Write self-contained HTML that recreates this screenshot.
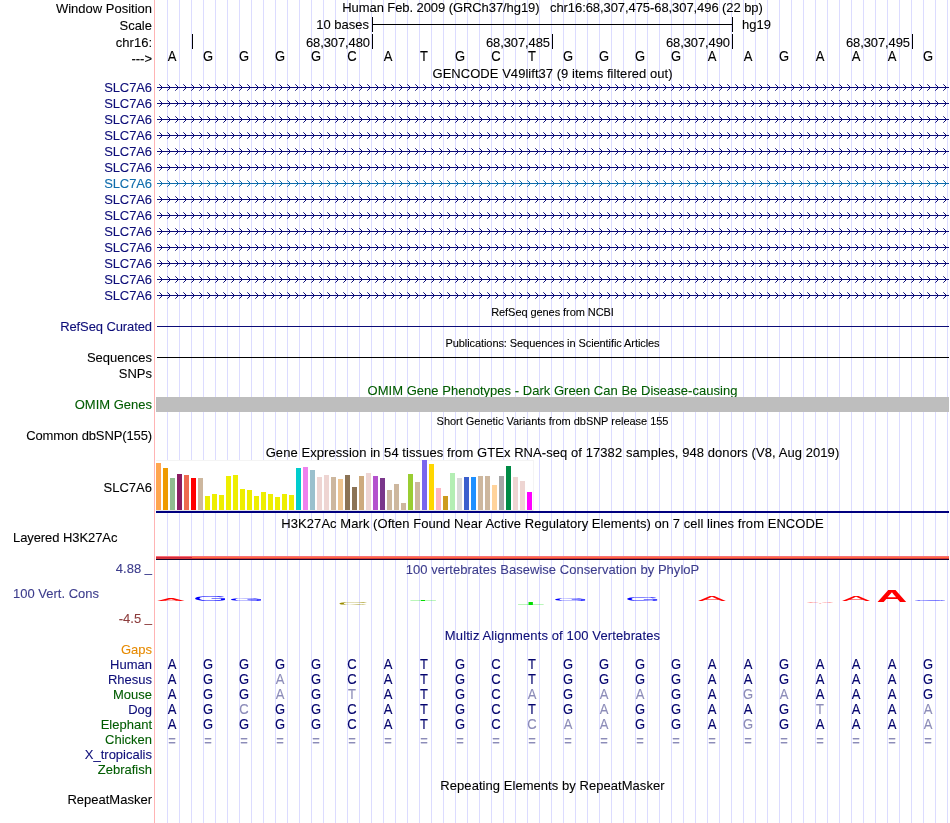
<!DOCTYPE html><html><head><meta charset="utf-8"><title>UCSC Genome Browser chr16:68,307,475-68,307,496</title><style>
html,body{margin:0;padding:0;background:#fff}
body{width:950px;height:823px;position:relative;overflow:hidden;font:13px/16px "Liberation Sans",Arial,Helvetica,sans-serif;color:#000}
.t{position:absolute;white-space:pre;height:16px;transform:scaleY(1.05);transform-origin:0 12px}
.r{text-align:right;left:0;width:152px}
.c{text-align:center;left:155px;width:795px}
.t.s{font-size:11px;transform:none}
.b{position:absolute;width:40px;margin-left:-20px;text-align:center;white-space:pre;height:16px;transform:translateY(-0.4px) scaleY(1.12);transform-origin:0 12px}
.g{position:absolute}
.t,.b{-webkit-text-stroke:0.1px}
.nv{color:#0c0c78}.b.nv{color:#04046e}.dg{color:#005c00}.lt{color:#8c8cb8}
#w{position:absolute;left:0;top:0;width:950px;height:823px;will-change:transform}
</style></head><body><div id="w">
<div class="g" style="left:167px;top:0;width:783px;height:823px;background-image:linear-gradient(90deg,#dcdcff 1px,transparent 1px);background-size:12px 100%"></div>
<div class="g" style="left:154px;top:0;width:1px;height:823px;background:#ffb4b4"></div>
<div class="t r " style="top:1px;">Window Position</div>
<div class="t r " style="top:18px;">Scale</div>
<div class="t r " style="top:35px;">chr16:</div>
<div class="t r " style="top:51px;">---&gt;</div>
<div class="t c " style="top:0px;letter-spacing:-0.078px">Human Feb. 2009 (GRCh37/hg19)   chr16:68,307,475-68,307,496 (22 bp)</div>
<div class="g" style="left:372px;top:17px;width:1px;height:15px;background:#000"></div>
<div class="g" style="left:732px;top:17px;width:1px;height:15px;background:#000"></div>
<div class="g" style="left:372px;top:24px;width:361px;height:1px;background:#000"></div>
<div class="t" style="left:200px;width:169px;text-align:right;top:17px">10 bases</div>
<div class="t" style="left:742px;top:17px">hg19</div>
<div class="g" style="left:192px;top:34px;width:1px;height:15px;background:#000"></div>
<div class="g" style="left:372px;top:34px;width:1px;height:15px;background:#000"></div>
<div class="t" style="left:270px;width:100px;text-align:right;top:35px;letter-spacing:-0.1px">68,307,480</div>
<div class="g" style="left:552px;top:34px;width:1px;height:15px;background:#000"></div>
<div class="t" style="left:450px;width:100px;text-align:right;top:35px;letter-spacing:-0.1px">68,307,485</div>
<div class="g" style="left:732px;top:34px;width:1px;height:15px;background:#000"></div>
<div class="t" style="left:630px;width:100px;text-align:right;top:35px;letter-spacing:-0.1px">68,307,490</div>
<div class="g" style="left:912px;top:34px;width:1px;height:15px;background:#000"></div>
<div class="t" style="left:810px;width:100px;text-align:right;top:35px;letter-spacing:-0.1px">68,307,495</div>
<div class="b" style="left:172.0px;top:49px">A</div>
<div class="b" style="left:208.0px;top:49px">G</div>
<div class="b" style="left:244.0px;top:49px">G</div>
<div class="b" style="left:280.0px;top:49px">G</div>
<div class="b" style="left:316.0px;top:49px">G</div>
<div class="b" style="left:352.0px;top:49px">C</div>
<div class="b" style="left:388.0px;top:49px">A</div>
<div class="b" style="left:424.0px;top:49px">T</div>
<div class="b" style="left:460.0px;top:49px">G</div>
<div class="b" style="left:496.0px;top:49px">C</div>
<div class="b" style="left:532.0px;top:49px">T</div>
<div class="b" style="left:568.0px;top:49px">G</div>
<div class="b" style="left:604.0px;top:49px">G</div>
<div class="b" style="left:640.0px;top:49px">G</div>
<div class="b" style="left:676.0px;top:49px">G</div>
<div class="b" style="left:712.0px;top:49px">A</div>
<div class="b" style="left:748.0px;top:49px">A</div>
<div class="b" style="left:784.0px;top:49px">G</div>
<div class="b" style="left:820.0px;top:49px">A</div>
<div class="b" style="left:856.0px;top:49px">A</div>
<div class="b" style="left:892.0px;top:49px">A</div>
<div class="b" style="left:928.0px;top:49px">G</div>
<div class="t c " style="top:66px;letter-spacing:0.04px">GENCODE V49lift37 (9 items filtered out)</div>
<div class="t r" style="top:80px;color:#0c0c78;letter-spacing:-0.1px">SLC7A6</div>
<div class="t r" style="top:96px;color:#0c0c78;letter-spacing:-0.1px">SLC7A6</div>
<div class="t r" style="top:112px;color:#0c0c78;letter-spacing:-0.1px">SLC7A6</div>
<div class="t r" style="top:128px;color:#0c0c78;letter-spacing:-0.1px">SLC7A6</div>
<div class="t r" style="top:144px;color:#0c0c78;letter-spacing:-0.1px">SLC7A6</div>
<div class="t r" style="top:160px;color:#0c0c78;letter-spacing:-0.1px">SLC7A6</div>
<div class="t r" style="top:176px;color:#0f6cac;letter-spacing:-0.1px">SLC7A6</div>
<div class="t r" style="top:192px;color:#0c0c78;letter-spacing:-0.1px">SLC7A6</div>
<div class="t r" style="top:208px;color:#0c0c78;letter-spacing:-0.1px">SLC7A6</div>
<div class="t r" style="top:224px;color:#0c0c78;letter-spacing:-0.1px">SLC7A6</div>
<div class="t r" style="top:240px;color:#0c0c78;letter-spacing:-0.1px">SLC7A6</div>
<div class="t r" style="top:256px;color:#0c0c78;letter-spacing:-0.1px">SLC7A6</div>
<div class="t r" style="top:272px;color:#0c0c78;letter-spacing:-0.1px">SLC7A6</div>
<div class="t r" style="top:288px;color:#0c0c78;letter-spacing:-0.1px">SLC7A6</div>
<svg class="g" style="left:0;top:0" width="950" height="823" viewBox="0 0 950 823"><defs><path id="ch" d="M-3.5,-3.5L0,0L-3.5,3.5" fill="none" stroke-width="1"/></defs>
<g stroke="#0c0c78"><path d="M157,87.5 H949" stroke-width="1" shape-rendering="crispEdges"/>
<path d="M159.3,84.3l3.2,3.2l-3.2,3.2M167.3,84.3l3.2,3.2l-3.2,3.2M175.3,84.3l3.2,3.2l-3.2,3.2M183.3,84.3l3.2,3.2l-3.2,3.2M191.3,84.3l3.2,3.2l-3.2,3.2M199.3,84.3l3.2,3.2l-3.2,3.2M207.3,84.3l3.2,3.2l-3.2,3.2M215.3,84.3l3.2,3.2l-3.2,3.2M223.3,84.3l3.2,3.2l-3.2,3.2M231.3,84.3l3.2,3.2l-3.2,3.2M239.3,84.3l3.2,3.2l-3.2,3.2M247.3,84.3l3.2,3.2l-3.2,3.2M255.3,84.3l3.2,3.2l-3.2,3.2M263.3,84.3l3.2,3.2l-3.2,3.2M271.3,84.3l3.2,3.2l-3.2,3.2M279.3,84.3l3.2,3.2l-3.2,3.2M287.3,84.3l3.2,3.2l-3.2,3.2M295.3,84.3l3.2,3.2l-3.2,3.2M303.3,84.3l3.2,3.2l-3.2,3.2M311.3,84.3l3.2,3.2l-3.2,3.2M319.3,84.3l3.2,3.2l-3.2,3.2M327.3,84.3l3.2,3.2l-3.2,3.2M335.3,84.3l3.2,3.2l-3.2,3.2M343.3,84.3l3.2,3.2l-3.2,3.2M351.3,84.3l3.2,3.2l-3.2,3.2M359.3,84.3l3.2,3.2l-3.2,3.2M367.3,84.3l3.2,3.2l-3.2,3.2M375.3,84.3l3.2,3.2l-3.2,3.2M383.3,84.3l3.2,3.2l-3.2,3.2M391.3,84.3l3.2,3.2l-3.2,3.2M399.3,84.3l3.2,3.2l-3.2,3.2M407.3,84.3l3.2,3.2l-3.2,3.2M415.3,84.3l3.2,3.2l-3.2,3.2M423.3,84.3l3.2,3.2l-3.2,3.2M431.3,84.3l3.2,3.2l-3.2,3.2M439.3,84.3l3.2,3.2l-3.2,3.2M447.3,84.3l3.2,3.2l-3.2,3.2M455.3,84.3l3.2,3.2l-3.2,3.2M463.3,84.3l3.2,3.2l-3.2,3.2M471.3,84.3l3.2,3.2l-3.2,3.2M479.3,84.3l3.2,3.2l-3.2,3.2M487.3,84.3l3.2,3.2l-3.2,3.2M495.3,84.3l3.2,3.2l-3.2,3.2M503.3,84.3l3.2,3.2l-3.2,3.2M511.3,84.3l3.2,3.2l-3.2,3.2M519.3,84.3l3.2,3.2l-3.2,3.2M527.3,84.3l3.2,3.2l-3.2,3.2M535.3,84.3l3.2,3.2l-3.2,3.2M543.3,84.3l3.2,3.2l-3.2,3.2M551.3,84.3l3.2,3.2l-3.2,3.2M559.3,84.3l3.2,3.2l-3.2,3.2M567.3,84.3l3.2,3.2l-3.2,3.2M575.3,84.3l3.2,3.2l-3.2,3.2M583.3,84.3l3.2,3.2l-3.2,3.2M591.3,84.3l3.2,3.2l-3.2,3.2M599.3,84.3l3.2,3.2l-3.2,3.2M607.3,84.3l3.2,3.2l-3.2,3.2M615.3,84.3l3.2,3.2l-3.2,3.2M623.3,84.3l3.2,3.2l-3.2,3.2M631.3,84.3l3.2,3.2l-3.2,3.2M639.3,84.3l3.2,3.2l-3.2,3.2M647.3,84.3l3.2,3.2l-3.2,3.2M655.3,84.3l3.2,3.2l-3.2,3.2M663.3,84.3l3.2,3.2l-3.2,3.2M671.3,84.3l3.2,3.2l-3.2,3.2M679.3,84.3l3.2,3.2l-3.2,3.2M687.3,84.3l3.2,3.2l-3.2,3.2M695.3,84.3l3.2,3.2l-3.2,3.2M703.3,84.3l3.2,3.2l-3.2,3.2M711.3,84.3l3.2,3.2l-3.2,3.2M719.3,84.3l3.2,3.2l-3.2,3.2M727.3,84.3l3.2,3.2l-3.2,3.2M735.3,84.3l3.2,3.2l-3.2,3.2M743.3,84.3l3.2,3.2l-3.2,3.2M751.3,84.3l3.2,3.2l-3.2,3.2M759.3,84.3l3.2,3.2l-3.2,3.2M767.3,84.3l3.2,3.2l-3.2,3.2M775.3,84.3l3.2,3.2l-3.2,3.2M783.3,84.3l3.2,3.2l-3.2,3.2M791.3,84.3l3.2,3.2l-3.2,3.2M799.3,84.3l3.2,3.2l-3.2,3.2M807.3,84.3l3.2,3.2l-3.2,3.2M815.3,84.3l3.2,3.2l-3.2,3.2M823.3,84.3l3.2,3.2l-3.2,3.2M831.3,84.3l3.2,3.2l-3.2,3.2M839.3,84.3l3.2,3.2l-3.2,3.2M847.3,84.3l3.2,3.2l-3.2,3.2M855.3,84.3l3.2,3.2l-3.2,3.2M863.3,84.3l3.2,3.2l-3.2,3.2M871.3,84.3l3.2,3.2l-3.2,3.2M879.3,84.3l3.2,3.2l-3.2,3.2M887.3,84.3l3.2,3.2l-3.2,3.2M895.3,84.3l3.2,3.2l-3.2,3.2M903.3,84.3l3.2,3.2l-3.2,3.2M911.3,84.3l3.2,3.2l-3.2,3.2M919.3,84.3l3.2,3.2l-3.2,3.2M927.3,84.3l3.2,3.2l-3.2,3.2M935.3,84.3l3.2,3.2l-3.2,3.2M943.3,84.3l3.2,3.2l-3.2,3.2" fill="none" stroke-width="1"/></g>
<g stroke="#0c0c78"><path d="M157,103.5 H949" stroke-width="1" shape-rendering="crispEdges"/>
<path d="M159.3,100.3l3.2,3.2l-3.2,3.2M167.3,100.3l3.2,3.2l-3.2,3.2M175.3,100.3l3.2,3.2l-3.2,3.2M183.3,100.3l3.2,3.2l-3.2,3.2M191.3,100.3l3.2,3.2l-3.2,3.2M199.3,100.3l3.2,3.2l-3.2,3.2M207.3,100.3l3.2,3.2l-3.2,3.2M215.3,100.3l3.2,3.2l-3.2,3.2M223.3,100.3l3.2,3.2l-3.2,3.2M231.3,100.3l3.2,3.2l-3.2,3.2M239.3,100.3l3.2,3.2l-3.2,3.2M247.3,100.3l3.2,3.2l-3.2,3.2M255.3,100.3l3.2,3.2l-3.2,3.2M263.3,100.3l3.2,3.2l-3.2,3.2M271.3,100.3l3.2,3.2l-3.2,3.2M279.3,100.3l3.2,3.2l-3.2,3.2M287.3,100.3l3.2,3.2l-3.2,3.2M295.3,100.3l3.2,3.2l-3.2,3.2M303.3,100.3l3.2,3.2l-3.2,3.2M311.3,100.3l3.2,3.2l-3.2,3.2M319.3,100.3l3.2,3.2l-3.2,3.2M327.3,100.3l3.2,3.2l-3.2,3.2M335.3,100.3l3.2,3.2l-3.2,3.2M343.3,100.3l3.2,3.2l-3.2,3.2M351.3,100.3l3.2,3.2l-3.2,3.2M359.3,100.3l3.2,3.2l-3.2,3.2M367.3,100.3l3.2,3.2l-3.2,3.2M375.3,100.3l3.2,3.2l-3.2,3.2M383.3,100.3l3.2,3.2l-3.2,3.2M391.3,100.3l3.2,3.2l-3.2,3.2M399.3,100.3l3.2,3.2l-3.2,3.2M407.3,100.3l3.2,3.2l-3.2,3.2M415.3,100.3l3.2,3.2l-3.2,3.2M423.3,100.3l3.2,3.2l-3.2,3.2M431.3,100.3l3.2,3.2l-3.2,3.2M439.3,100.3l3.2,3.2l-3.2,3.2M447.3,100.3l3.2,3.2l-3.2,3.2M455.3,100.3l3.2,3.2l-3.2,3.2M463.3,100.3l3.2,3.2l-3.2,3.2M471.3,100.3l3.2,3.2l-3.2,3.2M479.3,100.3l3.2,3.2l-3.2,3.2M487.3,100.3l3.2,3.2l-3.2,3.2M495.3,100.3l3.2,3.2l-3.2,3.2M503.3,100.3l3.2,3.2l-3.2,3.2M511.3,100.3l3.2,3.2l-3.2,3.2M519.3,100.3l3.2,3.2l-3.2,3.2M527.3,100.3l3.2,3.2l-3.2,3.2M535.3,100.3l3.2,3.2l-3.2,3.2M543.3,100.3l3.2,3.2l-3.2,3.2M551.3,100.3l3.2,3.2l-3.2,3.2M559.3,100.3l3.2,3.2l-3.2,3.2M567.3,100.3l3.2,3.2l-3.2,3.2M575.3,100.3l3.2,3.2l-3.2,3.2M583.3,100.3l3.2,3.2l-3.2,3.2M591.3,100.3l3.2,3.2l-3.2,3.2M599.3,100.3l3.2,3.2l-3.2,3.2M607.3,100.3l3.2,3.2l-3.2,3.2M615.3,100.3l3.2,3.2l-3.2,3.2M623.3,100.3l3.2,3.2l-3.2,3.2M631.3,100.3l3.2,3.2l-3.2,3.2M639.3,100.3l3.2,3.2l-3.2,3.2M647.3,100.3l3.2,3.2l-3.2,3.2M655.3,100.3l3.2,3.2l-3.2,3.2M663.3,100.3l3.2,3.2l-3.2,3.2M671.3,100.3l3.2,3.2l-3.2,3.2M679.3,100.3l3.2,3.2l-3.2,3.2M687.3,100.3l3.2,3.2l-3.2,3.2M695.3,100.3l3.2,3.2l-3.2,3.2M703.3,100.3l3.2,3.2l-3.2,3.2M711.3,100.3l3.2,3.2l-3.2,3.2M719.3,100.3l3.2,3.2l-3.2,3.2M727.3,100.3l3.2,3.2l-3.2,3.2M735.3,100.3l3.2,3.2l-3.2,3.2M743.3,100.3l3.2,3.2l-3.2,3.2M751.3,100.3l3.2,3.2l-3.2,3.2M759.3,100.3l3.2,3.2l-3.2,3.2M767.3,100.3l3.2,3.2l-3.2,3.2M775.3,100.3l3.2,3.2l-3.2,3.2M783.3,100.3l3.2,3.2l-3.2,3.2M791.3,100.3l3.2,3.2l-3.2,3.2M799.3,100.3l3.2,3.2l-3.2,3.2M807.3,100.3l3.2,3.2l-3.2,3.2M815.3,100.3l3.2,3.2l-3.2,3.2M823.3,100.3l3.2,3.2l-3.2,3.2M831.3,100.3l3.2,3.2l-3.2,3.2M839.3,100.3l3.2,3.2l-3.2,3.2M847.3,100.3l3.2,3.2l-3.2,3.2M855.3,100.3l3.2,3.2l-3.2,3.2M863.3,100.3l3.2,3.2l-3.2,3.2M871.3,100.3l3.2,3.2l-3.2,3.2M879.3,100.3l3.2,3.2l-3.2,3.2M887.3,100.3l3.2,3.2l-3.2,3.2M895.3,100.3l3.2,3.2l-3.2,3.2M903.3,100.3l3.2,3.2l-3.2,3.2M911.3,100.3l3.2,3.2l-3.2,3.2M919.3,100.3l3.2,3.2l-3.2,3.2M927.3,100.3l3.2,3.2l-3.2,3.2M935.3,100.3l3.2,3.2l-3.2,3.2M943.3,100.3l3.2,3.2l-3.2,3.2" fill="none" stroke-width="1"/></g>
<g stroke="#0c0c78"><path d="M157,119.5 H949" stroke-width="1" shape-rendering="crispEdges"/>
<path d="M159.3,116.3l3.2,3.2l-3.2,3.2M167.3,116.3l3.2,3.2l-3.2,3.2M175.3,116.3l3.2,3.2l-3.2,3.2M183.3,116.3l3.2,3.2l-3.2,3.2M191.3,116.3l3.2,3.2l-3.2,3.2M199.3,116.3l3.2,3.2l-3.2,3.2M207.3,116.3l3.2,3.2l-3.2,3.2M215.3,116.3l3.2,3.2l-3.2,3.2M223.3,116.3l3.2,3.2l-3.2,3.2M231.3,116.3l3.2,3.2l-3.2,3.2M239.3,116.3l3.2,3.2l-3.2,3.2M247.3,116.3l3.2,3.2l-3.2,3.2M255.3,116.3l3.2,3.2l-3.2,3.2M263.3,116.3l3.2,3.2l-3.2,3.2M271.3,116.3l3.2,3.2l-3.2,3.2M279.3,116.3l3.2,3.2l-3.2,3.2M287.3,116.3l3.2,3.2l-3.2,3.2M295.3,116.3l3.2,3.2l-3.2,3.2M303.3,116.3l3.2,3.2l-3.2,3.2M311.3,116.3l3.2,3.2l-3.2,3.2M319.3,116.3l3.2,3.2l-3.2,3.2M327.3,116.3l3.2,3.2l-3.2,3.2M335.3,116.3l3.2,3.2l-3.2,3.2M343.3,116.3l3.2,3.2l-3.2,3.2M351.3,116.3l3.2,3.2l-3.2,3.2M359.3,116.3l3.2,3.2l-3.2,3.2M367.3,116.3l3.2,3.2l-3.2,3.2M375.3,116.3l3.2,3.2l-3.2,3.2M383.3,116.3l3.2,3.2l-3.2,3.2M391.3,116.3l3.2,3.2l-3.2,3.2M399.3,116.3l3.2,3.2l-3.2,3.2M407.3,116.3l3.2,3.2l-3.2,3.2M415.3,116.3l3.2,3.2l-3.2,3.2M423.3,116.3l3.2,3.2l-3.2,3.2M431.3,116.3l3.2,3.2l-3.2,3.2M439.3,116.3l3.2,3.2l-3.2,3.2M447.3,116.3l3.2,3.2l-3.2,3.2M455.3,116.3l3.2,3.2l-3.2,3.2M463.3,116.3l3.2,3.2l-3.2,3.2M471.3,116.3l3.2,3.2l-3.2,3.2M479.3,116.3l3.2,3.2l-3.2,3.2M487.3,116.3l3.2,3.2l-3.2,3.2M495.3,116.3l3.2,3.2l-3.2,3.2M503.3,116.3l3.2,3.2l-3.2,3.2M511.3,116.3l3.2,3.2l-3.2,3.2M519.3,116.3l3.2,3.2l-3.2,3.2M527.3,116.3l3.2,3.2l-3.2,3.2M535.3,116.3l3.2,3.2l-3.2,3.2M543.3,116.3l3.2,3.2l-3.2,3.2M551.3,116.3l3.2,3.2l-3.2,3.2M559.3,116.3l3.2,3.2l-3.2,3.2M567.3,116.3l3.2,3.2l-3.2,3.2M575.3,116.3l3.2,3.2l-3.2,3.2M583.3,116.3l3.2,3.2l-3.2,3.2M591.3,116.3l3.2,3.2l-3.2,3.2M599.3,116.3l3.2,3.2l-3.2,3.2M607.3,116.3l3.2,3.2l-3.2,3.2M615.3,116.3l3.2,3.2l-3.2,3.2M623.3,116.3l3.2,3.2l-3.2,3.2M631.3,116.3l3.2,3.2l-3.2,3.2M639.3,116.3l3.2,3.2l-3.2,3.2M647.3,116.3l3.2,3.2l-3.2,3.2M655.3,116.3l3.2,3.2l-3.2,3.2M663.3,116.3l3.2,3.2l-3.2,3.2M671.3,116.3l3.2,3.2l-3.2,3.2M679.3,116.3l3.2,3.2l-3.2,3.2M687.3,116.3l3.2,3.2l-3.2,3.2M695.3,116.3l3.2,3.2l-3.2,3.2M703.3,116.3l3.2,3.2l-3.2,3.2M711.3,116.3l3.2,3.2l-3.2,3.2M719.3,116.3l3.2,3.2l-3.2,3.2M727.3,116.3l3.2,3.2l-3.2,3.2M735.3,116.3l3.2,3.2l-3.2,3.2M743.3,116.3l3.2,3.2l-3.2,3.2M751.3,116.3l3.2,3.2l-3.2,3.2M759.3,116.3l3.2,3.2l-3.2,3.2M767.3,116.3l3.2,3.2l-3.2,3.2M775.3,116.3l3.2,3.2l-3.2,3.2M783.3,116.3l3.2,3.2l-3.2,3.2M791.3,116.3l3.2,3.2l-3.2,3.2M799.3,116.3l3.2,3.2l-3.2,3.2M807.3,116.3l3.2,3.2l-3.2,3.2M815.3,116.3l3.2,3.2l-3.2,3.2M823.3,116.3l3.2,3.2l-3.2,3.2M831.3,116.3l3.2,3.2l-3.2,3.2M839.3,116.3l3.2,3.2l-3.2,3.2M847.3,116.3l3.2,3.2l-3.2,3.2M855.3,116.3l3.2,3.2l-3.2,3.2M863.3,116.3l3.2,3.2l-3.2,3.2M871.3,116.3l3.2,3.2l-3.2,3.2M879.3,116.3l3.2,3.2l-3.2,3.2M887.3,116.3l3.2,3.2l-3.2,3.2M895.3,116.3l3.2,3.2l-3.2,3.2M903.3,116.3l3.2,3.2l-3.2,3.2M911.3,116.3l3.2,3.2l-3.2,3.2M919.3,116.3l3.2,3.2l-3.2,3.2M927.3,116.3l3.2,3.2l-3.2,3.2M935.3,116.3l3.2,3.2l-3.2,3.2M943.3,116.3l3.2,3.2l-3.2,3.2" fill="none" stroke-width="1"/></g>
<g stroke="#0c0c78"><path d="M157,135.5 H949" stroke-width="1" shape-rendering="crispEdges"/>
<path d="M159.3,132.3l3.2,3.2l-3.2,3.2M167.3,132.3l3.2,3.2l-3.2,3.2M175.3,132.3l3.2,3.2l-3.2,3.2M183.3,132.3l3.2,3.2l-3.2,3.2M191.3,132.3l3.2,3.2l-3.2,3.2M199.3,132.3l3.2,3.2l-3.2,3.2M207.3,132.3l3.2,3.2l-3.2,3.2M215.3,132.3l3.2,3.2l-3.2,3.2M223.3,132.3l3.2,3.2l-3.2,3.2M231.3,132.3l3.2,3.2l-3.2,3.2M239.3,132.3l3.2,3.2l-3.2,3.2M247.3,132.3l3.2,3.2l-3.2,3.2M255.3,132.3l3.2,3.2l-3.2,3.2M263.3,132.3l3.2,3.2l-3.2,3.2M271.3,132.3l3.2,3.2l-3.2,3.2M279.3,132.3l3.2,3.2l-3.2,3.2M287.3,132.3l3.2,3.2l-3.2,3.2M295.3,132.3l3.2,3.2l-3.2,3.2M303.3,132.3l3.2,3.2l-3.2,3.2M311.3,132.3l3.2,3.2l-3.2,3.2M319.3,132.3l3.2,3.2l-3.2,3.2M327.3,132.3l3.2,3.2l-3.2,3.2M335.3,132.3l3.2,3.2l-3.2,3.2M343.3,132.3l3.2,3.2l-3.2,3.2M351.3,132.3l3.2,3.2l-3.2,3.2M359.3,132.3l3.2,3.2l-3.2,3.2M367.3,132.3l3.2,3.2l-3.2,3.2M375.3,132.3l3.2,3.2l-3.2,3.2M383.3,132.3l3.2,3.2l-3.2,3.2M391.3,132.3l3.2,3.2l-3.2,3.2M399.3,132.3l3.2,3.2l-3.2,3.2M407.3,132.3l3.2,3.2l-3.2,3.2M415.3,132.3l3.2,3.2l-3.2,3.2M423.3,132.3l3.2,3.2l-3.2,3.2M431.3,132.3l3.2,3.2l-3.2,3.2M439.3,132.3l3.2,3.2l-3.2,3.2M447.3,132.3l3.2,3.2l-3.2,3.2M455.3,132.3l3.2,3.2l-3.2,3.2M463.3,132.3l3.2,3.2l-3.2,3.2M471.3,132.3l3.2,3.2l-3.2,3.2M479.3,132.3l3.2,3.2l-3.2,3.2M487.3,132.3l3.2,3.2l-3.2,3.2M495.3,132.3l3.2,3.2l-3.2,3.2M503.3,132.3l3.2,3.2l-3.2,3.2M511.3,132.3l3.2,3.2l-3.2,3.2M519.3,132.3l3.2,3.2l-3.2,3.2M527.3,132.3l3.2,3.2l-3.2,3.2M535.3,132.3l3.2,3.2l-3.2,3.2M543.3,132.3l3.2,3.2l-3.2,3.2M551.3,132.3l3.2,3.2l-3.2,3.2M559.3,132.3l3.2,3.2l-3.2,3.2M567.3,132.3l3.2,3.2l-3.2,3.2M575.3,132.3l3.2,3.2l-3.2,3.2M583.3,132.3l3.2,3.2l-3.2,3.2M591.3,132.3l3.2,3.2l-3.2,3.2M599.3,132.3l3.2,3.2l-3.2,3.2M607.3,132.3l3.2,3.2l-3.2,3.2M615.3,132.3l3.2,3.2l-3.2,3.2M623.3,132.3l3.2,3.2l-3.2,3.2M631.3,132.3l3.2,3.2l-3.2,3.2M639.3,132.3l3.2,3.2l-3.2,3.2M647.3,132.3l3.2,3.2l-3.2,3.2M655.3,132.3l3.2,3.2l-3.2,3.2M663.3,132.3l3.2,3.2l-3.2,3.2M671.3,132.3l3.2,3.2l-3.2,3.2M679.3,132.3l3.2,3.2l-3.2,3.2M687.3,132.3l3.2,3.2l-3.2,3.2M695.3,132.3l3.2,3.2l-3.2,3.2M703.3,132.3l3.2,3.2l-3.2,3.2M711.3,132.3l3.2,3.2l-3.2,3.2M719.3,132.3l3.2,3.2l-3.2,3.2M727.3,132.3l3.2,3.2l-3.2,3.2M735.3,132.3l3.2,3.2l-3.2,3.2M743.3,132.3l3.2,3.2l-3.2,3.2M751.3,132.3l3.2,3.2l-3.2,3.2M759.3,132.3l3.2,3.2l-3.2,3.2M767.3,132.3l3.2,3.2l-3.2,3.2M775.3,132.3l3.2,3.2l-3.2,3.2M783.3,132.3l3.2,3.2l-3.2,3.2M791.3,132.3l3.2,3.2l-3.2,3.2M799.3,132.3l3.2,3.2l-3.2,3.2M807.3,132.3l3.2,3.2l-3.2,3.2M815.3,132.3l3.2,3.2l-3.2,3.2M823.3,132.3l3.2,3.2l-3.2,3.2M831.3,132.3l3.2,3.2l-3.2,3.2M839.3,132.3l3.2,3.2l-3.2,3.2M847.3,132.3l3.2,3.2l-3.2,3.2M855.3,132.3l3.2,3.2l-3.2,3.2M863.3,132.3l3.2,3.2l-3.2,3.2M871.3,132.3l3.2,3.2l-3.2,3.2M879.3,132.3l3.2,3.2l-3.2,3.2M887.3,132.3l3.2,3.2l-3.2,3.2M895.3,132.3l3.2,3.2l-3.2,3.2M903.3,132.3l3.2,3.2l-3.2,3.2M911.3,132.3l3.2,3.2l-3.2,3.2M919.3,132.3l3.2,3.2l-3.2,3.2M927.3,132.3l3.2,3.2l-3.2,3.2M935.3,132.3l3.2,3.2l-3.2,3.2M943.3,132.3l3.2,3.2l-3.2,3.2" fill="none" stroke-width="1"/></g>
<g stroke="#0c0c78"><path d="M157,151.5 H949" stroke-width="1" shape-rendering="crispEdges"/>
<path d="M159.3,148.3l3.2,3.2l-3.2,3.2M167.3,148.3l3.2,3.2l-3.2,3.2M175.3,148.3l3.2,3.2l-3.2,3.2M183.3,148.3l3.2,3.2l-3.2,3.2M191.3,148.3l3.2,3.2l-3.2,3.2M199.3,148.3l3.2,3.2l-3.2,3.2M207.3,148.3l3.2,3.2l-3.2,3.2M215.3,148.3l3.2,3.2l-3.2,3.2M223.3,148.3l3.2,3.2l-3.2,3.2M231.3,148.3l3.2,3.2l-3.2,3.2M239.3,148.3l3.2,3.2l-3.2,3.2M247.3,148.3l3.2,3.2l-3.2,3.2M255.3,148.3l3.2,3.2l-3.2,3.2M263.3,148.3l3.2,3.2l-3.2,3.2M271.3,148.3l3.2,3.2l-3.2,3.2M279.3,148.3l3.2,3.2l-3.2,3.2M287.3,148.3l3.2,3.2l-3.2,3.2M295.3,148.3l3.2,3.2l-3.2,3.2M303.3,148.3l3.2,3.2l-3.2,3.2M311.3,148.3l3.2,3.2l-3.2,3.2M319.3,148.3l3.2,3.2l-3.2,3.2M327.3,148.3l3.2,3.2l-3.2,3.2M335.3,148.3l3.2,3.2l-3.2,3.2M343.3,148.3l3.2,3.2l-3.2,3.2M351.3,148.3l3.2,3.2l-3.2,3.2M359.3,148.3l3.2,3.2l-3.2,3.2M367.3,148.3l3.2,3.2l-3.2,3.2M375.3,148.3l3.2,3.2l-3.2,3.2M383.3,148.3l3.2,3.2l-3.2,3.2M391.3,148.3l3.2,3.2l-3.2,3.2M399.3,148.3l3.2,3.2l-3.2,3.2M407.3,148.3l3.2,3.2l-3.2,3.2M415.3,148.3l3.2,3.2l-3.2,3.2M423.3,148.3l3.2,3.2l-3.2,3.2M431.3,148.3l3.2,3.2l-3.2,3.2M439.3,148.3l3.2,3.2l-3.2,3.2M447.3,148.3l3.2,3.2l-3.2,3.2M455.3,148.3l3.2,3.2l-3.2,3.2M463.3,148.3l3.2,3.2l-3.2,3.2M471.3,148.3l3.2,3.2l-3.2,3.2M479.3,148.3l3.2,3.2l-3.2,3.2M487.3,148.3l3.2,3.2l-3.2,3.2M495.3,148.3l3.2,3.2l-3.2,3.2M503.3,148.3l3.2,3.2l-3.2,3.2M511.3,148.3l3.2,3.2l-3.2,3.2M519.3,148.3l3.2,3.2l-3.2,3.2M527.3,148.3l3.2,3.2l-3.2,3.2M535.3,148.3l3.2,3.2l-3.2,3.2M543.3,148.3l3.2,3.2l-3.2,3.2M551.3,148.3l3.2,3.2l-3.2,3.2M559.3,148.3l3.2,3.2l-3.2,3.2M567.3,148.3l3.2,3.2l-3.2,3.2M575.3,148.3l3.2,3.2l-3.2,3.2M583.3,148.3l3.2,3.2l-3.2,3.2M591.3,148.3l3.2,3.2l-3.2,3.2M599.3,148.3l3.2,3.2l-3.2,3.2M607.3,148.3l3.2,3.2l-3.2,3.2M615.3,148.3l3.2,3.2l-3.2,3.2M623.3,148.3l3.2,3.2l-3.2,3.2M631.3,148.3l3.2,3.2l-3.2,3.2M639.3,148.3l3.2,3.2l-3.2,3.2M647.3,148.3l3.2,3.2l-3.2,3.2M655.3,148.3l3.2,3.2l-3.2,3.2M663.3,148.3l3.2,3.2l-3.2,3.2M671.3,148.3l3.2,3.2l-3.2,3.2M679.3,148.3l3.2,3.2l-3.2,3.2M687.3,148.3l3.2,3.2l-3.2,3.2M695.3,148.3l3.2,3.2l-3.2,3.2M703.3,148.3l3.2,3.2l-3.2,3.2M711.3,148.3l3.2,3.2l-3.2,3.2M719.3,148.3l3.2,3.2l-3.2,3.2M727.3,148.3l3.2,3.2l-3.2,3.2M735.3,148.3l3.2,3.2l-3.2,3.2M743.3,148.3l3.2,3.2l-3.2,3.2M751.3,148.3l3.2,3.2l-3.2,3.2M759.3,148.3l3.2,3.2l-3.2,3.2M767.3,148.3l3.2,3.2l-3.2,3.2M775.3,148.3l3.2,3.2l-3.2,3.2M783.3,148.3l3.2,3.2l-3.2,3.2M791.3,148.3l3.2,3.2l-3.2,3.2M799.3,148.3l3.2,3.2l-3.2,3.2M807.3,148.3l3.2,3.2l-3.2,3.2M815.3,148.3l3.2,3.2l-3.2,3.2M823.3,148.3l3.2,3.2l-3.2,3.2M831.3,148.3l3.2,3.2l-3.2,3.2M839.3,148.3l3.2,3.2l-3.2,3.2M847.3,148.3l3.2,3.2l-3.2,3.2M855.3,148.3l3.2,3.2l-3.2,3.2M863.3,148.3l3.2,3.2l-3.2,3.2M871.3,148.3l3.2,3.2l-3.2,3.2M879.3,148.3l3.2,3.2l-3.2,3.2M887.3,148.3l3.2,3.2l-3.2,3.2M895.3,148.3l3.2,3.2l-3.2,3.2M903.3,148.3l3.2,3.2l-3.2,3.2M911.3,148.3l3.2,3.2l-3.2,3.2M919.3,148.3l3.2,3.2l-3.2,3.2M927.3,148.3l3.2,3.2l-3.2,3.2M935.3,148.3l3.2,3.2l-3.2,3.2M943.3,148.3l3.2,3.2l-3.2,3.2" fill="none" stroke-width="1"/></g>
<g stroke="#0c0c78"><path d="M157,167.5 H949" stroke-width="1" shape-rendering="crispEdges"/>
<path d="M159.3,164.3l3.2,3.2l-3.2,3.2M167.3,164.3l3.2,3.2l-3.2,3.2M175.3,164.3l3.2,3.2l-3.2,3.2M183.3,164.3l3.2,3.2l-3.2,3.2M191.3,164.3l3.2,3.2l-3.2,3.2M199.3,164.3l3.2,3.2l-3.2,3.2M207.3,164.3l3.2,3.2l-3.2,3.2M215.3,164.3l3.2,3.2l-3.2,3.2M223.3,164.3l3.2,3.2l-3.2,3.2M231.3,164.3l3.2,3.2l-3.2,3.2M239.3,164.3l3.2,3.2l-3.2,3.2M247.3,164.3l3.2,3.2l-3.2,3.2M255.3,164.3l3.2,3.2l-3.2,3.2M263.3,164.3l3.2,3.2l-3.2,3.2M271.3,164.3l3.2,3.2l-3.2,3.2M279.3,164.3l3.2,3.2l-3.2,3.2M287.3,164.3l3.2,3.2l-3.2,3.2M295.3,164.3l3.2,3.2l-3.2,3.2M303.3,164.3l3.2,3.2l-3.2,3.2M311.3,164.3l3.2,3.2l-3.2,3.2M319.3,164.3l3.2,3.2l-3.2,3.2M327.3,164.3l3.2,3.2l-3.2,3.2M335.3,164.3l3.2,3.2l-3.2,3.2M343.3,164.3l3.2,3.2l-3.2,3.2M351.3,164.3l3.2,3.2l-3.2,3.2M359.3,164.3l3.2,3.2l-3.2,3.2M367.3,164.3l3.2,3.2l-3.2,3.2M375.3,164.3l3.2,3.2l-3.2,3.2M383.3,164.3l3.2,3.2l-3.2,3.2M391.3,164.3l3.2,3.2l-3.2,3.2M399.3,164.3l3.2,3.2l-3.2,3.2M407.3,164.3l3.2,3.2l-3.2,3.2M415.3,164.3l3.2,3.2l-3.2,3.2M423.3,164.3l3.2,3.2l-3.2,3.2M431.3,164.3l3.2,3.2l-3.2,3.2M439.3,164.3l3.2,3.2l-3.2,3.2M447.3,164.3l3.2,3.2l-3.2,3.2M455.3,164.3l3.2,3.2l-3.2,3.2M463.3,164.3l3.2,3.2l-3.2,3.2M471.3,164.3l3.2,3.2l-3.2,3.2M479.3,164.3l3.2,3.2l-3.2,3.2M487.3,164.3l3.2,3.2l-3.2,3.2M495.3,164.3l3.2,3.2l-3.2,3.2M503.3,164.3l3.2,3.2l-3.2,3.2M511.3,164.3l3.2,3.2l-3.2,3.2M519.3,164.3l3.2,3.2l-3.2,3.2M527.3,164.3l3.2,3.2l-3.2,3.2M535.3,164.3l3.2,3.2l-3.2,3.2M543.3,164.3l3.2,3.2l-3.2,3.2M551.3,164.3l3.2,3.2l-3.2,3.2M559.3,164.3l3.2,3.2l-3.2,3.2M567.3,164.3l3.2,3.2l-3.2,3.2M575.3,164.3l3.2,3.2l-3.2,3.2M583.3,164.3l3.2,3.2l-3.2,3.2M591.3,164.3l3.2,3.2l-3.2,3.2M599.3,164.3l3.2,3.2l-3.2,3.2M607.3,164.3l3.2,3.2l-3.2,3.2M615.3,164.3l3.2,3.2l-3.2,3.2M623.3,164.3l3.2,3.2l-3.2,3.2M631.3,164.3l3.2,3.2l-3.2,3.2M639.3,164.3l3.2,3.2l-3.2,3.2M647.3,164.3l3.2,3.2l-3.2,3.2M655.3,164.3l3.2,3.2l-3.2,3.2M663.3,164.3l3.2,3.2l-3.2,3.2M671.3,164.3l3.2,3.2l-3.2,3.2M679.3,164.3l3.2,3.2l-3.2,3.2M687.3,164.3l3.2,3.2l-3.2,3.2M695.3,164.3l3.2,3.2l-3.2,3.2M703.3,164.3l3.2,3.2l-3.2,3.2M711.3,164.3l3.2,3.2l-3.2,3.2M719.3,164.3l3.2,3.2l-3.2,3.2M727.3,164.3l3.2,3.2l-3.2,3.2M735.3,164.3l3.2,3.2l-3.2,3.2M743.3,164.3l3.2,3.2l-3.2,3.2M751.3,164.3l3.2,3.2l-3.2,3.2M759.3,164.3l3.2,3.2l-3.2,3.2M767.3,164.3l3.2,3.2l-3.2,3.2M775.3,164.3l3.2,3.2l-3.2,3.2M783.3,164.3l3.2,3.2l-3.2,3.2M791.3,164.3l3.2,3.2l-3.2,3.2M799.3,164.3l3.2,3.2l-3.2,3.2M807.3,164.3l3.2,3.2l-3.2,3.2M815.3,164.3l3.2,3.2l-3.2,3.2M823.3,164.3l3.2,3.2l-3.2,3.2M831.3,164.3l3.2,3.2l-3.2,3.2M839.3,164.3l3.2,3.2l-3.2,3.2M847.3,164.3l3.2,3.2l-3.2,3.2M855.3,164.3l3.2,3.2l-3.2,3.2M863.3,164.3l3.2,3.2l-3.2,3.2M871.3,164.3l3.2,3.2l-3.2,3.2M879.3,164.3l3.2,3.2l-3.2,3.2M887.3,164.3l3.2,3.2l-3.2,3.2M895.3,164.3l3.2,3.2l-3.2,3.2M903.3,164.3l3.2,3.2l-3.2,3.2M911.3,164.3l3.2,3.2l-3.2,3.2M919.3,164.3l3.2,3.2l-3.2,3.2M927.3,164.3l3.2,3.2l-3.2,3.2M935.3,164.3l3.2,3.2l-3.2,3.2M943.3,164.3l3.2,3.2l-3.2,3.2" fill="none" stroke-width="1"/></g>
<g stroke="#0f6cac"><path d="M157,183.5 H949" stroke-width="1" shape-rendering="crispEdges"/>
<path d="M159.3,180.3l3.2,3.2l-3.2,3.2M167.3,180.3l3.2,3.2l-3.2,3.2M175.3,180.3l3.2,3.2l-3.2,3.2M183.3,180.3l3.2,3.2l-3.2,3.2M191.3,180.3l3.2,3.2l-3.2,3.2M199.3,180.3l3.2,3.2l-3.2,3.2M207.3,180.3l3.2,3.2l-3.2,3.2M215.3,180.3l3.2,3.2l-3.2,3.2M223.3,180.3l3.2,3.2l-3.2,3.2M231.3,180.3l3.2,3.2l-3.2,3.2M239.3,180.3l3.2,3.2l-3.2,3.2M247.3,180.3l3.2,3.2l-3.2,3.2M255.3,180.3l3.2,3.2l-3.2,3.2M263.3,180.3l3.2,3.2l-3.2,3.2M271.3,180.3l3.2,3.2l-3.2,3.2M279.3,180.3l3.2,3.2l-3.2,3.2M287.3,180.3l3.2,3.2l-3.2,3.2M295.3,180.3l3.2,3.2l-3.2,3.2M303.3,180.3l3.2,3.2l-3.2,3.2M311.3,180.3l3.2,3.2l-3.2,3.2M319.3,180.3l3.2,3.2l-3.2,3.2M327.3,180.3l3.2,3.2l-3.2,3.2M335.3,180.3l3.2,3.2l-3.2,3.2M343.3,180.3l3.2,3.2l-3.2,3.2M351.3,180.3l3.2,3.2l-3.2,3.2M359.3,180.3l3.2,3.2l-3.2,3.2M367.3,180.3l3.2,3.2l-3.2,3.2M375.3,180.3l3.2,3.2l-3.2,3.2M383.3,180.3l3.2,3.2l-3.2,3.2M391.3,180.3l3.2,3.2l-3.2,3.2M399.3,180.3l3.2,3.2l-3.2,3.2M407.3,180.3l3.2,3.2l-3.2,3.2M415.3,180.3l3.2,3.2l-3.2,3.2M423.3,180.3l3.2,3.2l-3.2,3.2M431.3,180.3l3.2,3.2l-3.2,3.2M439.3,180.3l3.2,3.2l-3.2,3.2M447.3,180.3l3.2,3.2l-3.2,3.2M455.3,180.3l3.2,3.2l-3.2,3.2M463.3,180.3l3.2,3.2l-3.2,3.2M471.3,180.3l3.2,3.2l-3.2,3.2M479.3,180.3l3.2,3.2l-3.2,3.2M487.3,180.3l3.2,3.2l-3.2,3.2M495.3,180.3l3.2,3.2l-3.2,3.2M503.3,180.3l3.2,3.2l-3.2,3.2M511.3,180.3l3.2,3.2l-3.2,3.2M519.3,180.3l3.2,3.2l-3.2,3.2M527.3,180.3l3.2,3.2l-3.2,3.2M535.3,180.3l3.2,3.2l-3.2,3.2M543.3,180.3l3.2,3.2l-3.2,3.2M551.3,180.3l3.2,3.2l-3.2,3.2M559.3,180.3l3.2,3.2l-3.2,3.2M567.3,180.3l3.2,3.2l-3.2,3.2M575.3,180.3l3.2,3.2l-3.2,3.2M583.3,180.3l3.2,3.2l-3.2,3.2M591.3,180.3l3.2,3.2l-3.2,3.2M599.3,180.3l3.2,3.2l-3.2,3.2M607.3,180.3l3.2,3.2l-3.2,3.2M615.3,180.3l3.2,3.2l-3.2,3.2M623.3,180.3l3.2,3.2l-3.2,3.2M631.3,180.3l3.2,3.2l-3.2,3.2M639.3,180.3l3.2,3.2l-3.2,3.2M647.3,180.3l3.2,3.2l-3.2,3.2M655.3,180.3l3.2,3.2l-3.2,3.2M663.3,180.3l3.2,3.2l-3.2,3.2M671.3,180.3l3.2,3.2l-3.2,3.2M679.3,180.3l3.2,3.2l-3.2,3.2M687.3,180.3l3.2,3.2l-3.2,3.2M695.3,180.3l3.2,3.2l-3.2,3.2M703.3,180.3l3.2,3.2l-3.2,3.2M711.3,180.3l3.2,3.2l-3.2,3.2M719.3,180.3l3.2,3.2l-3.2,3.2M727.3,180.3l3.2,3.2l-3.2,3.2M735.3,180.3l3.2,3.2l-3.2,3.2M743.3,180.3l3.2,3.2l-3.2,3.2M751.3,180.3l3.2,3.2l-3.2,3.2M759.3,180.3l3.2,3.2l-3.2,3.2M767.3,180.3l3.2,3.2l-3.2,3.2M775.3,180.3l3.2,3.2l-3.2,3.2M783.3,180.3l3.2,3.2l-3.2,3.2M791.3,180.3l3.2,3.2l-3.2,3.2M799.3,180.3l3.2,3.2l-3.2,3.2M807.3,180.3l3.2,3.2l-3.2,3.2M815.3,180.3l3.2,3.2l-3.2,3.2M823.3,180.3l3.2,3.2l-3.2,3.2M831.3,180.3l3.2,3.2l-3.2,3.2M839.3,180.3l3.2,3.2l-3.2,3.2M847.3,180.3l3.2,3.2l-3.2,3.2M855.3,180.3l3.2,3.2l-3.2,3.2M863.3,180.3l3.2,3.2l-3.2,3.2M871.3,180.3l3.2,3.2l-3.2,3.2M879.3,180.3l3.2,3.2l-3.2,3.2M887.3,180.3l3.2,3.2l-3.2,3.2M895.3,180.3l3.2,3.2l-3.2,3.2M903.3,180.3l3.2,3.2l-3.2,3.2M911.3,180.3l3.2,3.2l-3.2,3.2M919.3,180.3l3.2,3.2l-3.2,3.2M927.3,180.3l3.2,3.2l-3.2,3.2M935.3,180.3l3.2,3.2l-3.2,3.2M943.3,180.3l3.2,3.2l-3.2,3.2" fill="none" stroke-width="1"/></g>
<g stroke="#0c0c78"><path d="M157,199.5 H949" stroke-width="1" shape-rendering="crispEdges"/>
<path d="M159.3,196.3l3.2,3.2l-3.2,3.2M167.3,196.3l3.2,3.2l-3.2,3.2M175.3,196.3l3.2,3.2l-3.2,3.2M183.3,196.3l3.2,3.2l-3.2,3.2M191.3,196.3l3.2,3.2l-3.2,3.2M199.3,196.3l3.2,3.2l-3.2,3.2M207.3,196.3l3.2,3.2l-3.2,3.2M215.3,196.3l3.2,3.2l-3.2,3.2M223.3,196.3l3.2,3.2l-3.2,3.2M231.3,196.3l3.2,3.2l-3.2,3.2M239.3,196.3l3.2,3.2l-3.2,3.2M247.3,196.3l3.2,3.2l-3.2,3.2M255.3,196.3l3.2,3.2l-3.2,3.2M263.3,196.3l3.2,3.2l-3.2,3.2M271.3,196.3l3.2,3.2l-3.2,3.2M279.3,196.3l3.2,3.2l-3.2,3.2M287.3,196.3l3.2,3.2l-3.2,3.2M295.3,196.3l3.2,3.2l-3.2,3.2M303.3,196.3l3.2,3.2l-3.2,3.2M311.3,196.3l3.2,3.2l-3.2,3.2M319.3,196.3l3.2,3.2l-3.2,3.2M327.3,196.3l3.2,3.2l-3.2,3.2M335.3,196.3l3.2,3.2l-3.2,3.2M343.3,196.3l3.2,3.2l-3.2,3.2M351.3,196.3l3.2,3.2l-3.2,3.2M359.3,196.3l3.2,3.2l-3.2,3.2M367.3,196.3l3.2,3.2l-3.2,3.2M375.3,196.3l3.2,3.2l-3.2,3.2M383.3,196.3l3.2,3.2l-3.2,3.2M391.3,196.3l3.2,3.2l-3.2,3.2M399.3,196.3l3.2,3.2l-3.2,3.2M407.3,196.3l3.2,3.2l-3.2,3.2M415.3,196.3l3.2,3.2l-3.2,3.2M423.3,196.3l3.2,3.2l-3.2,3.2M431.3,196.3l3.2,3.2l-3.2,3.2M439.3,196.3l3.2,3.2l-3.2,3.2M447.3,196.3l3.2,3.2l-3.2,3.2M455.3,196.3l3.2,3.2l-3.2,3.2M463.3,196.3l3.2,3.2l-3.2,3.2M471.3,196.3l3.2,3.2l-3.2,3.2M479.3,196.3l3.2,3.2l-3.2,3.2M487.3,196.3l3.2,3.2l-3.2,3.2M495.3,196.3l3.2,3.2l-3.2,3.2M503.3,196.3l3.2,3.2l-3.2,3.2M511.3,196.3l3.2,3.2l-3.2,3.2M519.3,196.3l3.2,3.2l-3.2,3.2M527.3,196.3l3.2,3.2l-3.2,3.2M535.3,196.3l3.2,3.2l-3.2,3.2M543.3,196.3l3.2,3.2l-3.2,3.2M551.3,196.3l3.2,3.2l-3.2,3.2M559.3,196.3l3.2,3.2l-3.2,3.2M567.3,196.3l3.2,3.2l-3.2,3.2M575.3,196.3l3.2,3.2l-3.2,3.2M583.3,196.3l3.2,3.2l-3.2,3.2M591.3,196.3l3.2,3.2l-3.2,3.2M599.3,196.3l3.2,3.2l-3.2,3.2M607.3,196.3l3.2,3.2l-3.2,3.2M615.3,196.3l3.2,3.2l-3.2,3.2M623.3,196.3l3.2,3.2l-3.2,3.2M631.3,196.3l3.2,3.2l-3.2,3.2M639.3,196.3l3.2,3.2l-3.2,3.2M647.3,196.3l3.2,3.2l-3.2,3.2M655.3,196.3l3.2,3.2l-3.2,3.2M663.3,196.3l3.2,3.2l-3.2,3.2M671.3,196.3l3.2,3.2l-3.2,3.2M679.3,196.3l3.2,3.2l-3.2,3.2M687.3,196.3l3.2,3.2l-3.2,3.2M695.3,196.3l3.2,3.2l-3.2,3.2M703.3,196.3l3.2,3.2l-3.2,3.2M711.3,196.3l3.2,3.2l-3.2,3.2M719.3,196.3l3.2,3.2l-3.2,3.2M727.3,196.3l3.2,3.2l-3.2,3.2M735.3,196.3l3.2,3.2l-3.2,3.2M743.3,196.3l3.2,3.2l-3.2,3.2M751.3,196.3l3.2,3.2l-3.2,3.2M759.3,196.3l3.2,3.2l-3.2,3.2M767.3,196.3l3.2,3.2l-3.2,3.2M775.3,196.3l3.2,3.2l-3.2,3.2M783.3,196.3l3.2,3.2l-3.2,3.2M791.3,196.3l3.2,3.2l-3.2,3.2M799.3,196.3l3.2,3.2l-3.2,3.2M807.3,196.3l3.2,3.2l-3.2,3.2M815.3,196.3l3.2,3.2l-3.2,3.2M823.3,196.3l3.2,3.2l-3.2,3.2M831.3,196.3l3.2,3.2l-3.2,3.2M839.3,196.3l3.2,3.2l-3.2,3.2M847.3,196.3l3.2,3.2l-3.2,3.2M855.3,196.3l3.2,3.2l-3.2,3.2M863.3,196.3l3.2,3.2l-3.2,3.2M871.3,196.3l3.2,3.2l-3.2,3.2M879.3,196.3l3.2,3.2l-3.2,3.2M887.3,196.3l3.2,3.2l-3.2,3.2M895.3,196.3l3.2,3.2l-3.2,3.2M903.3,196.3l3.2,3.2l-3.2,3.2M911.3,196.3l3.2,3.2l-3.2,3.2M919.3,196.3l3.2,3.2l-3.2,3.2M927.3,196.3l3.2,3.2l-3.2,3.2M935.3,196.3l3.2,3.2l-3.2,3.2M943.3,196.3l3.2,3.2l-3.2,3.2" fill="none" stroke-width="1"/></g>
<g stroke="#0c0c78"><path d="M157,215.5 H949" stroke-width="1" shape-rendering="crispEdges"/>
<path d="M159.3,212.3l3.2,3.2l-3.2,3.2M167.3,212.3l3.2,3.2l-3.2,3.2M175.3,212.3l3.2,3.2l-3.2,3.2M183.3,212.3l3.2,3.2l-3.2,3.2M191.3,212.3l3.2,3.2l-3.2,3.2M199.3,212.3l3.2,3.2l-3.2,3.2M207.3,212.3l3.2,3.2l-3.2,3.2M215.3,212.3l3.2,3.2l-3.2,3.2M223.3,212.3l3.2,3.2l-3.2,3.2M231.3,212.3l3.2,3.2l-3.2,3.2M239.3,212.3l3.2,3.2l-3.2,3.2M247.3,212.3l3.2,3.2l-3.2,3.2M255.3,212.3l3.2,3.2l-3.2,3.2M263.3,212.3l3.2,3.2l-3.2,3.2M271.3,212.3l3.2,3.2l-3.2,3.2M279.3,212.3l3.2,3.2l-3.2,3.2M287.3,212.3l3.2,3.2l-3.2,3.2M295.3,212.3l3.2,3.2l-3.2,3.2M303.3,212.3l3.2,3.2l-3.2,3.2M311.3,212.3l3.2,3.2l-3.2,3.2M319.3,212.3l3.2,3.2l-3.2,3.2M327.3,212.3l3.2,3.2l-3.2,3.2M335.3,212.3l3.2,3.2l-3.2,3.2M343.3,212.3l3.2,3.2l-3.2,3.2M351.3,212.3l3.2,3.2l-3.2,3.2M359.3,212.3l3.2,3.2l-3.2,3.2M367.3,212.3l3.2,3.2l-3.2,3.2M375.3,212.3l3.2,3.2l-3.2,3.2M383.3,212.3l3.2,3.2l-3.2,3.2M391.3,212.3l3.2,3.2l-3.2,3.2M399.3,212.3l3.2,3.2l-3.2,3.2M407.3,212.3l3.2,3.2l-3.2,3.2M415.3,212.3l3.2,3.2l-3.2,3.2M423.3,212.3l3.2,3.2l-3.2,3.2M431.3,212.3l3.2,3.2l-3.2,3.2M439.3,212.3l3.2,3.2l-3.2,3.2M447.3,212.3l3.2,3.2l-3.2,3.2M455.3,212.3l3.2,3.2l-3.2,3.2M463.3,212.3l3.2,3.2l-3.2,3.2M471.3,212.3l3.2,3.2l-3.2,3.2M479.3,212.3l3.2,3.2l-3.2,3.2M487.3,212.3l3.2,3.2l-3.2,3.2M495.3,212.3l3.2,3.2l-3.2,3.2M503.3,212.3l3.2,3.2l-3.2,3.2M511.3,212.3l3.2,3.2l-3.2,3.2M519.3,212.3l3.2,3.2l-3.2,3.2M527.3,212.3l3.2,3.2l-3.2,3.2M535.3,212.3l3.2,3.2l-3.2,3.2M543.3,212.3l3.2,3.2l-3.2,3.2M551.3,212.3l3.2,3.2l-3.2,3.2M559.3,212.3l3.2,3.2l-3.2,3.2M567.3,212.3l3.2,3.2l-3.2,3.2M575.3,212.3l3.2,3.2l-3.2,3.2M583.3,212.3l3.2,3.2l-3.2,3.2M591.3,212.3l3.2,3.2l-3.2,3.2M599.3,212.3l3.2,3.2l-3.2,3.2M607.3,212.3l3.2,3.2l-3.2,3.2M615.3,212.3l3.2,3.2l-3.2,3.2M623.3,212.3l3.2,3.2l-3.2,3.2M631.3,212.3l3.2,3.2l-3.2,3.2M639.3,212.3l3.2,3.2l-3.2,3.2M647.3,212.3l3.2,3.2l-3.2,3.2M655.3,212.3l3.2,3.2l-3.2,3.2M663.3,212.3l3.2,3.2l-3.2,3.2M671.3,212.3l3.2,3.2l-3.2,3.2M679.3,212.3l3.2,3.2l-3.2,3.2M687.3,212.3l3.2,3.2l-3.2,3.2M695.3,212.3l3.2,3.2l-3.2,3.2M703.3,212.3l3.2,3.2l-3.2,3.2M711.3,212.3l3.2,3.2l-3.2,3.2M719.3,212.3l3.2,3.2l-3.2,3.2M727.3,212.3l3.2,3.2l-3.2,3.2M735.3,212.3l3.2,3.2l-3.2,3.2M743.3,212.3l3.2,3.2l-3.2,3.2M751.3,212.3l3.2,3.2l-3.2,3.2M759.3,212.3l3.2,3.2l-3.2,3.2M767.3,212.3l3.2,3.2l-3.2,3.2M775.3,212.3l3.2,3.2l-3.2,3.2M783.3,212.3l3.2,3.2l-3.2,3.2M791.3,212.3l3.2,3.2l-3.2,3.2M799.3,212.3l3.2,3.2l-3.2,3.2M807.3,212.3l3.2,3.2l-3.2,3.2M815.3,212.3l3.2,3.2l-3.2,3.2M823.3,212.3l3.2,3.2l-3.2,3.2M831.3,212.3l3.2,3.2l-3.2,3.2M839.3,212.3l3.2,3.2l-3.2,3.2M847.3,212.3l3.2,3.2l-3.2,3.2M855.3,212.3l3.2,3.2l-3.2,3.2M863.3,212.3l3.2,3.2l-3.2,3.2M871.3,212.3l3.2,3.2l-3.2,3.2M879.3,212.3l3.2,3.2l-3.2,3.2M887.3,212.3l3.2,3.2l-3.2,3.2M895.3,212.3l3.2,3.2l-3.2,3.2M903.3,212.3l3.2,3.2l-3.2,3.2M911.3,212.3l3.2,3.2l-3.2,3.2M919.3,212.3l3.2,3.2l-3.2,3.2M927.3,212.3l3.2,3.2l-3.2,3.2M935.3,212.3l3.2,3.2l-3.2,3.2M943.3,212.3l3.2,3.2l-3.2,3.2" fill="none" stroke-width="1"/></g>
<g stroke="#0c0c78"><path d="M157,231.5 H949" stroke-width="1" shape-rendering="crispEdges"/>
<path d="M159.3,228.3l3.2,3.2l-3.2,3.2M167.3,228.3l3.2,3.2l-3.2,3.2M175.3,228.3l3.2,3.2l-3.2,3.2M183.3,228.3l3.2,3.2l-3.2,3.2M191.3,228.3l3.2,3.2l-3.2,3.2M199.3,228.3l3.2,3.2l-3.2,3.2M207.3,228.3l3.2,3.2l-3.2,3.2M215.3,228.3l3.2,3.2l-3.2,3.2M223.3,228.3l3.2,3.2l-3.2,3.2M231.3,228.3l3.2,3.2l-3.2,3.2M239.3,228.3l3.2,3.2l-3.2,3.2M247.3,228.3l3.2,3.2l-3.2,3.2M255.3,228.3l3.2,3.2l-3.2,3.2M263.3,228.3l3.2,3.2l-3.2,3.2M271.3,228.3l3.2,3.2l-3.2,3.2M279.3,228.3l3.2,3.2l-3.2,3.2M287.3,228.3l3.2,3.2l-3.2,3.2M295.3,228.3l3.2,3.2l-3.2,3.2M303.3,228.3l3.2,3.2l-3.2,3.2M311.3,228.3l3.2,3.2l-3.2,3.2M319.3,228.3l3.2,3.2l-3.2,3.2M327.3,228.3l3.2,3.2l-3.2,3.2M335.3,228.3l3.2,3.2l-3.2,3.2M343.3,228.3l3.2,3.2l-3.2,3.2M351.3,228.3l3.2,3.2l-3.2,3.2M359.3,228.3l3.2,3.2l-3.2,3.2M367.3,228.3l3.2,3.2l-3.2,3.2M375.3,228.3l3.2,3.2l-3.2,3.2M383.3,228.3l3.2,3.2l-3.2,3.2M391.3,228.3l3.2,3.2l-3.2,3.2M399.3,228.3l3.2,3.2l-3.2,3.2M407.3,228.3l3.2,3.2l-3.2,3.2M415.3,228.3l3.2,3.2l-3.2,3.2M423.3,228.3l3.2,3.2l-3.2,3.2M431.3,228.3l3.2,3.2l-3.2,3.2M439.3,228.3l3.2,3.2l-3.2,3.2M447.3,228.3l3.2,3.2l-3.2,3.2M455.3,228.3l3.2,3.2l-3.2,3.2M463.3,228.3l3.2,3.2l-3.2,3.2M471.3,228.3l3.2,3.2l-3.2,3.2M479.3,228.3l3.2,3.2l-3.2,3.2M487.3,228.3l3.2,3.2l-3.2,3.2M495.3,228.3l3.2,3.2l-3.2,3.2M503.3,228.3l3.2,3.2l-3.2,3.2M511.3,228.3l3.2,3.2l-3.2,3.2M519.3,228.3l3.2,3.2l-3.2,3.2M527.3,228.3l3.2,3.2l-3.2,3.2M535.3,228.3l3.2,3.2l-3.2,3.2M543.3,228.3l3.2,3.2l-3.2,3.2M551.3,228.3l3.2,3.2l-3.2,3.2M559.3,228.3l3.2,3.2l-3.2,3.2M567.3,228.3l3.2,3.2l-3.2,3.2M575.3,228.3l3.2,3.2l-3.2,3.2M583.3,228.3l3.2,3.2l-3.2,3.2M591.3,228.3l3.2,3.2l-3.2,3.2M599.3,228.3l3.2,3.2l-3.2,3.2M607.3,228.3l3.2,3.2l-3.2,3.2M615.3,228.3l3.2,3.2l-3.2,3.2M623.3,228.3l3.2,3.2l-3.2,3.2M631.3,228.3l3.2,3.2l-3.2,3.2M639.3,228.3l3.2,3.2l-3.2,3.2M647.3,228.3l3.2,3.2l-3.2,3.2M655.3,228.3l3.2,3.2l-3.2,3.2M663.3,228.3l3.2,3.2l-3.2,3.2M671.3,228.3l3.2,3.2l-3.2,3.2M679.3,228.3l3.2,3.2l-3.2,3.2M687.3,228.3l3.2,3.2l-3.2,3.2M695.3,228.3l3.2,3.2l-3.2,3.2M703.3,228.3l3.2,3.2l-3.2,3.2M711.3,228.3l3.2,3.2l-3.2,3.2M719.3,228.3l3.2,3.2l-3.2,3.2M727.3,228.3l3.2,3.2l-3.2,3.2M735.3,228.3l3.2,3.2l-3.2,3.2M743.3,228.3l3.2,3.2l-3.2,3.2M751.3,228.3l3.2,3.2l-3.2,3.2M759.3,228.3l3.2,3.2l-3.2,3.2M767.3,228.3l3.2,3.2l-3.2,3.2M775.3,228.3l3.2,3.2l-3.2,3.2M783.3,228.3l3.2,3.2l-3.2,3.2M791.3,228.3l3.2,3.2l-3.2,3.2M799.3,228.3l3.2,3.2l-3.2,3.2M807.3,228.3l3.2,3.2l-3.2,3.2M815.3,228.3l3.2,3.2l-3.2,3.2M823.3,228.3l3.2,3.2l-3.2,3.2M831.3,228.3l3.2,3.2l-3.2,3.2M839.3,228.3l3.2,3.2l-3.2,3.2M847.3,228.3l3.2,3.2l-3.2,3.2M855.3,228.3l3.2,3.2l-3.2,3.2M863.3,228.3l3.2,3.2l-3.2,3.2M871.3,228.3l3.2,3.2l-3.2,3.2M879.3,228.3l3.2,3.2l-3.2,3.2M887.3,228.3l3.2,3.2l-3.2,3.2M895.3,228.3l3.2,3.2l-3.2,3.2M903.3,228.3l3.2,3.2l-3.2,3.2M911.3,228.3l3.2,3.2l-3.2,3.2M919.3,228.3l3.2,3.2l-3.2,3.2M927.3,228.3l3.2,3.2l-3.2,3.2M935.3,228.3l3.2,3.2l-3.2,3.2M943.3,228.3l3.2,3.2l-3.2,3.2" fill="none" stroke-width="1"/></g>
<g stroke="#0c0c78"><path d="M157,247.5 H949" stroke-width="1" shape-rendering="crispEdges"/>
<path d="M159.3,244.3l3.2,3.2l-3.2,3.2M167.3,244.3l3.2,3.2l-3.2,3.2M175.3,244.3l3.2,3.2l-3.2,3.2M183.3,244.3l3.2,3.2l-3.2,3.2M191.3,244.3l3.2,3.2l-3.2,3.2M199.3,244.3l3.2,3.2l-3.2,3.2M207.3,244.3l3.2,3.2l-3.2,3.2M215.3,244.3l3.2,3.2l-3.2,3.2M223.3,244.3l3.2,3.2l-3.2,3.2M231.3,244.3l3.2,3.2l-3.2,3.2M239.3,244.3l3.2,3.2l-3.2,3.2M247.3,244.3l3.2,3.2l-3.2,3.2M255.3,244.3l3.2,3.2l-3.2,3.2M263.3,244.3l3.2,3.2l-3.2,3.2M271.3,244.3l3.2,3.2l-3.2,3.2M279.3,244.3l3.2,3.2l-3.2,3.2M287.3,244.3l3.2,3.2l-3.2,3.2M295.3,244.3l3.2,3.2l-3.2,3.2M303.3,244.3l3.2,3.2l-3.2,3.2M311.3,244.3l3.2,3.2l-3.2,3.2M319.3,244.3l3.2,3.2l-3.2,3.2M327.3,244.3l3.2,3.2l-3.2,3.2M335.3,244.3l3.2,3.2l-3.2,3.2M343.3,244.3l3.2,3.2l-3.2,3.2M351.3,244.3l3.2,3.2l-3.2,3.2M359.3,244.3l3.2,3.2l-3.2,3.2M367.3,244.3l3.2,3.2l-3.2,3.2M375.3,244.3l3.2,3.2l-3.2,3.2M383.3,244.3l3.2,3.2l-3.2,3.2M391.3,244.3l3.2,3.2l-3.2,3.2M399.3,244.3l3.2,3.2l-3.2,3.2M407.3,244.3l3.2,3.2l-3.2,3.2M415.3,244.3l3.2,3.2l-3.2,3.2M423.3,244.3l3.2,3.2l-3.2,3.2M431.3,244.3l3.2,3.2l-3.2,3.2M439.3,244.3l3.2,3.2l-3.2,3.2M447.3,244.3l3.2,3.2l-3.2,3.2M455.3,244.3l3.2,3.2l-3.2,3.2M463.3,244.3l3.2,3.2l-3.2,3.2M471.3,244.3l3.2,3.2l-3.2,3.2M479.3,244.3l3.2,3.2l-3.2,3.2M487.3,244.3l3.2,3.2l-3.2,3.2M495.3,244.3l3.2,3.2l-3.2,3.2M503.3,244.3l3.2,3.2l-3.2,3.2M511.3,244.3l3.2,3.2l-3.2,3.2M519.3,244.3l3.2,3.2l-3.2,3.2M527.3,244.3l3.2,3.2l-3.2,3.2M535.3,244.3l3.2,3.2l-3.2,3.2M543.3,244.3l3.2,3.2l-3.2,3.2M551.3,244.3l3.2,3.2l-3.2,3.2M559.3,244.3l3.2,3.2l-3.2,3.2M567.3,244.3l3.2,3.2l-3.2,3.2M575.3,244.3l3.2,3.2l-3.2,3.2M583.3,244.3l3.2,3.2l-3.2,3.2M591.3,244.3l3.2,3.2l-3.2,3.2M599.3,244.3l3.2,3.2l-3.2,3.2M607.3,244.3l3.2,3.2l-3.2,3.2M615.3,244.3l3.2,3.2l-3.2,3.2M623.3,244.3l3.2,3.2l-3.2,3.2M631.3,244.3l3.2,3.2l-3.2,3.2M639.3,244.3l3.2,3.2l-3.2,3.2M647.3,244.3l3.2,3.2l-3.2,3.2M655.3,244.3l3.2,3.2l-3.2,3.2M663.3,244.3l3.2,3.2l-3.2,3.2M671.3,244.3l3.2,3.2l-3.2,3.2M679.3,244.3l3.2,3.2l-3.2,3.2M687.3,244.3l3.2,3.2l-3.2,3.2M695.3,244.3l3.2,3.2l-3.2,3.2M703.3,244.3l3.2,3.2l-3.2,3.2M711.3,244.3l3.2,3.2l-3.2,3.2M719.3,244.3l3.2,3.2l-3.2,3.2M727.3,244.3l3.2,3.2l-3.2,3.2M735.3,244.3l3.2,3.2l-3.2,3.2M743.3,244.3l3.2,3.2l-3.2,3.2M751.3,244.3l3.2,3.2l-3.2,3.2M759.3,244.3l3.2,3.2l-3.2,3.2M767.3,244.3l3.2,3.2l-3.2,3.2M775.3,244.3l3.2,3.2l-3.2,3.2M783.3,244.3l3.2,3.2l-3.2,3.2M791.3,244.3l3.2,3.2l-3.2,3.2M799.3,244.3l3.2,3.2l-3.2,3.2M807.3,244.3l3.2,3.2l-3.2,3.2M815.3,244.3l3.2,3.2l-3.2,3.2M823.3,244.3l3.2,3.2l-3.2,3.2M831.3,244.3l3.2,3.2l-3.2,3.2M839.3,244.3l3.2,3.2l-3.2,3.2M847.3,244.3l3.2,3.2l-3.2,3.2M855.3,244.3l3.2,3.2l-3.2,3.2M863.3,244.3l3.2,3.2l-3.2,3.2M871.3,244.3l3.2,3.2l-3.2,3.2M879.3,244.3l3.2,3.2l-3.2,3.2M887.3,244.3l3.2,3.2l-3.2,3.2M895.3,244.3l3.2,3.2l-3.2,3.2M903.3,244.3l3.2,3.2l-3.2,3.2M911.3,244.3l3.2,3.2l-3.2,3.2M919.3,244.3l3.2,3.2l-3.2,3.2M927.3,244.3l3.2,3.2l-3.2,3.2M935.3,244.3l3.2,3.2l-3.2,3.2M943.3,244.3l3.2,3.2l-3.2,3.2" fill="none" stroke-width="1"/></g>
<g stroke="#0c0c78"><path d="M157,263.5 H949" stroke-width="1" shape-rendering="crispEdges"/>
<path d="M159.3,260.3l3.2,3.2l-3.2,3.2M167.3,260.3l3.2,3.2l-3.2,3.2M175.3,260.3l3.2,3.2l-3.2,3.2M183.3,260.3l3.2,3.2l-3.2,3.2M191.3,260.3l3.2,3.2l-3.2,3.2M199.3,260.3l3.2,3.2l-3.2,3.2M207.3,260.3l3.2,3.2l-3.2,3.2M215.3,260.3l3.2,3.2l-3.2,3.2M223.3,260.3l3.2,3.2l-3.2,3.2M231.3,260.3l3.2,3.2l-3.2,3.2M239.3,260.3l3.2,3.2l-3.2,3.2M247.3,260.3l3.2,3.2l-3.2,3.2M255.3,260.3l3.2,3.2l-3.2,3.2M263.3,260.3l3.2,3.2l-3.2,3.2M271.3,260.3l3.2,3.2l-3.2,3.2M279.3,260.3l3.2,3.2l-3.2,3.2M287.3,260.3l3.2,3.2l-3.2,3.2M295.3,260.3l3.2,3.2l-3.2,3.2M303.3,260.3l3.2,3.2l-3.2,3.2M311.3,260.3l3.2,3.2l-3.2,3.2M319.3,260.3l3.2,3.2l-3.2,3.2M327.3,260.3l3.2,3.2l-3.2,3.2M335.3,260.3l3.2,3.2l-3.2,3.2M343.3,260.3l3.2,3.2l-3.2,3.2M351.3,260.3l3.2,3.2l-3.2,3.2M359.3,260.3l3.2,3.2l-3.2,3.2M367.3,260.3l3.2,3.2l-3.2,3.2M375.3,260.3l3.2,3.2l-3.2,3.2M383.3,260.3l3.2,3.2l-3.2,3.2M391.3,260.3l3.2,3.2l-3.2,3.2M399.3,260.3l3.2,3.2l-3.2,3.2M407.3,260.3l3.2,3.2l-3.2,3.2M415.3,260.3l3.2,3.2l-3.2,3.2M423.3,260.3l3.2,3.2l-3.2,3.2M431.3,260.3l3.2,3.2l-3.2,3.2M439.3,260.3l3.2,3.2l-3.2,3.2M447.3,260.3l3.2,3.2l-3.2,3.2M455.3,260.3l3.2,3.2l-3.2,3.2M463.3,260.3l3.2,3.2l-3.2,3.2M471.3,260.3l3.2,3.2l-3.2,3.2M479.3,260.3l3.2,3.2l-3.2,3.2M487.3,260.3l3.2,3.2l-3.2,3.2M495.3,260.3l3.2,3.2l-3.2,3.2M503.3,260.3l3.2,3.2l-3.2,3.2M511.3,260.3l3.2,3.2l-3.2,3.2M519.3,260.3l3.2,3.2l-3.2,3.2M527.3,260.3l3.2,3.2l-3.2,3.2M535.3,260.3l3.2,3.2l-3.2,3.2M543.3,260.3l3.2,3.2l-3.2,3.2M551.3,260.3l3.2,3.2l-3.2,3.2M559.3,260.3l3.2,3.2l-3.2,3.2M567.3,260.3l3.2,3.2l-3.2,3.2M575.3,260.3l3.2,3.2l-3.2,3.2M583.3,260.3l3.2,3.2l-3.2,3.2M591.3,260.3l3.2,3.2l-3.2,3.2M599.3,260.3l3.2,3.2l-3.2,3.2M607.3,260.3l3.2,3.2l-3.2,3.2M615.3,260.3l3.2,3.2l-3.2,3.2M623.3,260.3l3.2,3.2l-3.2,3.2M631.3,260.3l3.2,3.2l-3.2,3.2M639.3,260.3l3.2,3.2l-3.2,3.2M647.3,260.3l3.2,3.2l-3.2,3.2M655.3,260.3l3.2,3.2l-3.2,3.2M663.3,260.3l3.2,3.2l-3.2,3.2M671.3,260.3l3.2,3.2l-3.2,3.2M679.3,260.3l3.2,3.2l-3.2,3.2M687.3,260.3l3.2,3.2l-3.2,3.2M695.3,260.3l3.2,3.2l-3.2,3.2M703.3,260.3l3.2,3.2l-3.2,3.2M711.3,260.3l3.2,3.2l-3.2,3.2M719.3,260.3l3.2,3.2l-3.2,3.2M727.3,260.3l3.2,3.2l-3.2,3.2M735.3,260.3l3.2,3.2l-3.2,3.2M743.3,260.3l3.2,3.2l-3.2,3.2M751.3,260.3l3.2,3.2l-3.2,3.2M759.3,260.3l3.2,3.2l-3.2,3.2M767.3,260.3l3.2,3.2l-3.2,3.2M775.3,260.3l3.2,3.2l-3.2,3.2M783.3,260.3l3.2,3.2l-3.2,3.2M791.3,260.3l3.2,3.2l-3.2,3.2M799.3,260.3l3.2,3.2l-3.2,3.2M807.3,260.3l3.2,3.2l-3.2,3.2M815.3,260.3l3.2,3.2l-3.2,3.2M823.3,260.3l3.2,3.2l-3.2,3.2M831.3,260.3l3.2,3.2l-3.2,3.2M839.3,260.3l3.2,3.2l-3.2,3.2M847.3,260.3l3.2,3.2l-3.2,3.2M855.3,260.3l3.2,3.2l-3.2,3.2M863.3,260.3l3.2,3.2l-3.2,3.2M871.3,260.3l3.2,3.2l-3.2,3.2M879.3,260.3l3.2,3.2l-3.2,3.2M887.3,260.3l3.2,3.2l-3.2,3.2M895.3,260.3l3.2,3.2l-3.2,3.2M903.3,260.3l3.2,3.2l-3.2,3.2M911.3,260.3l3.2,3.2l-3.2,3.2M919.3,260.3l3.2,3.2l-3.2,3.2M927.3,260.3l3.2,3.2l-3.2,3.2M935.3,260.3l3.2,3.2l-3.2,3.2M943.3,260.3l3.2,3.2l-3.2,3.2" fill="none" stroke-width="1"/></g>
<g stroke="#0c0c78"><path d="M157,279.5 H949" stroke-width="1" shape-rendering="crispEdges"/>
<path d="M159.3,276.3l3.2,3.2l-3.2,3.2M167.3,276.3l3.2,3.2l-3.2,3.2M175.3,276.3l3.2,3.2l-3.2,3.2M183.3,276.3l3.2,3.2l-3.2,3.2M191.3,276.3l3.2,3.2l-3.2,3.2M199.3,276.3l3.2,3.2l-3.2,3.2M207.3,276.3l3.2,3.2l-3.2,3.2M215.3,276.3l3.2,3.2l-3.2,3.2M223.3,276.3l3.2,3.2l-3.2,3.2M231.3,276.3l3.2,3.2l-3.2,3.2M239.3,276.3l3.2,3.2l-3.2,3.2M247.3,276.3l3.2,3.2l-3.2,3.2M255.3,276.3l3.2,3.2l-3.2,3.2M263.3,276.3l3.2,3.2l-3.2,3.2M271.3,276.3l3.2,3.2l-3.2,3.2M279.3,276.3l3.2,3.2l-3.2,3.2M287.3,276.3l3.2,3.2l-3.2,3.2M295.3,276.3l3.2,3.2l-3.2,3.2M303.3,276.3l3.2,3.2l-3.2,3.2M311.3,276.3l3.2,3.2l-3.2,3.2M319.3,276.3l3.2,3.2l-3.2,3.2M327.3,276.3l3.2,3.2l-3.2,3.2M335.3,276.3l3.2,3.2l-3.2,3.2M343.3,276.3l3.2,3.2l-3.2,3.2M351.3,276.3l3.2,3.2l-3.2,3.2M359.3,276.3l3.2,3.2l-3.2,3.2M367.3,276.3l3.2,3.2l-3.2,3.2M375.3,276.3l3.2,3.2l-3.2,3.2M383.3,276.3l3.2,3.2l-3.2,3.2M391.3,276.3l3.2,3.2l-3.2,3.2M399.3,276.3l3.2,3.2l-3.2,3.2M407.3,276.3l3.2,3.2l-3.2,3.2M415.3,276.3l3.2,3.2l-3.2,3.2M423.3,276.3l3.2,3.2l-3.2,3.2M431.3,276.3l3.2,3.2l-3.2,3.2M439.3,276.3l3.2,3.2l-3.2,3.2M447.3,276.3l3.2,3.2l-3.2,3.2M455.3,276.3l3.2,3.2l-3.2,3.2M463.3,276.3l3.2,3.2l-3.2,3.2M471.3,276.3l3.2,3.2l-3.2,3.2M479.3,276.3l3.2,3.2l-3.2,3.2M487.3,276.3l3.2,3.2l-3.2,3.2M495.3,276.3l3.2,3.2l-3.2,3.2M503.3,276.3l3.2,3.2l-3.2,3.2M511.3,276.3l3.2,3.2l-3.2,3.2M519.3,276.3l3.2,3.2l-3.2,3.2M527.3,276.3l3.2,3.2l-3.2,3.2M535.3,276.3l3.2,3.2l-3.2,3.2M543.3,276.3l3.2,3.2l-3.2,3.2M551.3,276.3l3.2,3.2l-3.2,3.2M559.3,276.3l3.2,3.2l-3.2,3.2M567.3,276.3l3.2,3.2l-3.2,3.2M575.3,276.3l3.2,3.2l-3.2,3.2M583.3,276.3l3.2,3.2l-3.2,3.2M591.3,276.3l3.2,3.2l-3.2,3.2M599.3,276.3l3.2,3.2l-3.2,3.2M607.3,276.3l3.2,3.2l-3.2,3.2M615.3,276.3l3.2,3.2l-3.2,3.2M623.3,276.3l3.2,3.2l-3.2,3.2M631.3,276.3l3.2,3.2l-3.2,3.2M639.3,276.3l3.2,3.2l-3.2,3.2M647.3,276.3l3.2,3.2l-3.2,3.2M655.3,276.3l3.2,3.2l-3.2,3.2M663.3,276.3l3.2,3.2l-3.2,3.2M671.3,276.3l3.2,3.2l-3.2,3.2M679.3,276.3l3.2,3.2l-3.2,3.2M687.3,276.3l3.2,3.2l-3.2,3.2M695.3,276.3l3.2,3.2l-3.2,3.2M703.3,276.3l3.2,3.2l-3.2,3.2M711.3,276.3l3.2,3.2l-3.2,3.2M719.3,276.3l3.2,3.2l-3.2,3.2M727.3,276.3l3.2,3.2l-3.2,3.2M735.3,276.3l3.2,3.2l-3.2,3.2M743.3,276.3l3.2,3.2l-3.2,3.2M751.3,276.3l3.2,3.2l-3.2,3.2M759.3,276.3l3.2,3.2l-3.2,3.2M767.3,276.3l3.2,3.2l-3.2,3.2M775.3,276.3l3.2,3.2l-3.2,3.2M783.3,276.3l3.2,3.2l-3.2,3.2M791.3,276.3l3.2,3.2l-3.2,3.2M799.3,276.3l3.2,3.2l-3.2,3.2M807.3,276.3l3.2,3.2l-3.2,3.2M815.3,276.3l3.2,3.2l-3.2,3.2M823.3,276.3l3.2,3.2l-3.2,3.2M831.3,276.3l3.2,3.2l-3.2,3.2M839.3,276.3l3.2,3.2l-3.2,3.2M847.3,276.3l3.2,3.2l-3.2,3.2M855.3,276.3l3.2,3.2l-3.2,3.2M863.3,276.3l3.2,3.2l-3.2,3.2M871.3,276.3l3.2,3.2l-3.2,3.2M879.3,276.3l3.2,3.2l-3.2,3.2M887.3,276.3l3.2,3.2l-3.2,3.2M895.3,276.3l3.2,3.2l-3.2,3.2M903.3,276.3l3.2,3.2l-3.2,3.2M911.3,276.3l3.2,3.2l-3.2,3.2M919.3,276.3l3.2,3.2l-3.2,3.2M927.3,276.3l3.2,3.2l-3.2,3.2M935.3,276.3l3.2,3.2l-3.2,3.2M943.3,276.3l3.2,3.2l-3.2,3.2" fill="none" stroke-width="1"/></g>
<g stroke="#0c0c78"><path d="M157,295.5 H949" stroke-width="1" shape-rendering="crispEdges"/>
<path d="M159.3,292.3l3.2,3.2l-3.2,3.2M167.3,292.3l3.2,3.2l-3.2,3.2M175.3,292.3l3.2,3.2l-3.2,3.2M183.3,292.3l3.2,3.2l-3.2,3.2M191.3,292.3l3.2,3.2l-3.2,3.2M199.3,292.3l3.2,3.2l-3.2,3.2M207.3,292.3l3.2,3.2l-3.2,3.2M215.3,292.3l3.2,3.2l-3.2,3.2M223.3,292.3l3.2,3.2l-3.2,3.2M231.3,292.3l3.2,3.2l-3.2,3.2M239.3,292.3l3.2,3.2l-3.2,3.2M247.3,292.3l3.2,3.2l-3.2,3.2M255.3,292.3l3.2,3.2l-3.2,3.2M263.3,292.3l3.2,3.2l-3.2,3.2M271.3,292.3l3.2,3.2l-3.2,3.2M279.3,292.3l3.2,3.2l-3.2,3.2M287.3,292.3l3.2,3.2l-3.2,3.2M295.3,292.3l3.2,3.2l-3.2,3.2M303.3,292.3l3.2,3.2l-3.2,3.2M311.3,292.3l3.2,3.2l-3.2,3.2M319.3,292.3l3.2,3.2l-3.2,3.2M327.3,292.3l3.2,3.2l-3.2,3.2M335.3,292.3l3.2,3.2l-3.2,3.2M343.3,292.3l3.2,3.2l-3.2,3.2M351.3,292.3l3.2,3.2l-3.2,3.2M359.3,292.3l3.2,3.2l-3.2,3.2M367.3,292.3l3.2,3.2l-3.2,3.2M375.3,292.3l3.2,3.2l-3.2,3.2M383.3,292.3l3.2,3.2l-3.2,3.2M391.3,292.3l3.2,3.2l-3.2,3.2M399.3,292.3l3.2,3.2l-3.2,3.2M407.3,292.3l3.2,3.2l-3.2,3.2M415.3,292.3l3.2,3.2l-3.2,3.2M423.3,292.3l3.2,3.2l-3.2,3.2M431.3,292.3l3.2,3.2l-3.2,3.2M439.3,292.3l3.2,3.2l-3.2,3.2M447.3,292.3l3.2,3.2l-3.2,3.2M455.3,292.3l3.2,3.2l-3.2,3.2M463.3,292.3l3.2,3.2l-3.2,3.2M471.3,292.3l3.2,3.2l-3.2,3.2M479.3,292.3l3.2,3.2l-3.2,3.2M487.3,292.3l3.2,3.2l-3.2,3.2M495.3,292.3l3.2,3.2l-3.2,3.2M503.3,292.3l3.2,3.2l-3.2,3.2M511.3,292.3l3.2,3.2l-3.2,3.2M519.3,292.3l3.2,3.2l-3.2,3.2M527.3,292.3l3.2,3.2l-3.2,3.2M535.3,292.3l3.2,3.2l-3.2,3.2M543.3,292.3l3.2,3.2l-3.2,3.2M551.3,292.3l3.2,3.2l-3.2,3.2M559.3,292.3l3.2,3.2l-3.2,3.2M567.3,292.3l3.2,3.2l-3.2,3.2M575.3,292.3l3.2,3.2l-3.2,3.2M583.3,292.3l3.2,3.2l-3.2,3.2M591.3,292.3l3.2,3.2l-3.2,3.2M599.3,292.3l3.2,3.2l-3.2,3.2M607.3,292.3l3.2,3.2l-3.2,3.2M615.3,292.3l3.2,3.2l-3.2,3.2M623.3,292.3l3.2,3.2l-3.2,3.2M631.3,292.3l3.2,3.2l-3.2,3.2M639.3,292.3l3.2,3.2l-3.2,3.2M647.3,292.3l3.2,3.2l-3.2,3.2M655.3,292.3l3.2,3.2l-3.2,3.2M663.3,292.3l3.2,3.2l-3.2,3.2M671.3,292.3l3.2,3.2l-3.2,3.2M679.3,292.3l3.2,3.2l-3.2,3.2M687.3,292.3l3.2,3.2l-3.2,3.2M695.3,292.3l3.2,3.2l-3.2,3.2M703.3,292.3l3.2,3.2l-3.2,3.2M711.3,292.3l3.2,3.2l-3.2,3.2M719.3,292.3l3.2,3.2l-3.2,3.2M727.3,292.3l3.2,3.2l-3.2,3.2M735.3,292.3l3.2,3.2l-3.2,3.2M743.3,292.3l3.2,3.2l-3.2,3.2M751.3,292.3l3.2,3.2l-3.2,3.2M759.3,292.3l3.2,3.2l-3.2,3.2M767.3,292.3l3.2,3.2l-3.2,3.2M775.3,292.3l3.2,3.2l-3.2,3.2M783.3,292.3l3.2,3.2l-3.2,3.2M791.3,292.3l3.2,3.2l-3.2,3.2M799.3,292.3l3.2,3.2l-3.2,3.2M807.3,292.3l3.2,3.2l-3.2,3.2M815.3,292.3l3.2,3.2l-3.2,3.2M823.3,292.3l3.2,3.2l-3.2,3.2M831.3,292.3l3.2,3.2l-3.2,3.2M839.3,292.3l3.2,3.2l-3.2,3.2M847.3,292.3l3.2,3.2l-3.2,3.2M855.3,292.3l3.2,3.2l-3.2,3.2M863.3,292.3l3.2,3.2l-3.2,3.2M871.3,292.3l3.2,3.2l-3.2,3.2M879.3,292.3l3.2,3.2l-3.2,3.2M887.3,292.3l3.2,3.2l-3.2,3.2M895.3,292.3l3.2,3.2l-3.2,3.2M903.3,292.3l3.2,3.2l-3.2,3.2M911.3,292.3l3.2,3.2l-3.2,3.2M919.3,292.3l3.2,3.2l-3.2,3.2M927.3,292.3l3.2,3.2l-3.2,3.2M935.3,292.3l3.2,3.2l-3.2,3.2M943.3,292.3l3.2,3.2l-3.2,3.2" fill="none" stroke-width="1"/></g>
</svg>
<div class="t c s" style="top:304px;letter-spacing:-0.07px">RefSeq genes from NCBI</div>
<div class="t r nv" style="top:319px;letter-spacing:-0.1px">RefSeq Curated</div>
<div class="g" style="left:157px;top:326px;width:792px;height:1px;background:#0c0c78"></div>
<div class="t c s" style="top:335px;letter-spacing:-0.08px">Publications: Sequences in Scientific Articles</div>
<div class="t r " style="top:350px;">Sequences</div>
<div class="g" style="left:157px;top:357px;width:792px;height:1px;background:#000"></div>
<div class="t r " style="top:366px;">SNPs</div>
<div class="t c dg" style="top:383px;letter-spacing:0.025px">OMIM Gene Phenotypes - Dark Green Can Be Disease-causing</div>
<div class="t r dg" style="top:397px;">OMIM Genes</div>
<div class="g" style="left:156px;top:397px;width:793px;height:15px;background:#bebebe"></div>
<div class="t c s" style="top:413px;letter-spacing:-0.03px">Short Genetic Variants from dbSNP release 155</div>
<div class="t r " style="top:428px;letter-spacing:-0.12px">Common dbSNP(155)</div>
<div class="t c " style="top:445px;letter-spacing:0.07px">Gene Expression in 54 tissues from GTEx RNA-seq of 17382 samples, 948 donors (V8, Aug 2019)</div>
<div class="t r " style="top:480px;">SLC7A6</div>
<div class="g" style="left:156px;top:460px;width:378px;height:51px;background:#fff"></div>
<div class="g" style="left:156px;top:460px;width:378px;height:1px;background:#f4f4f4"></div>
<div class="g" style="left:156px;top:510px;width:378px;height:1px;background:#e4e4e4"></div>
<div class="g" style="left:533px;top:460px;width:1px;height:51px;background:#f4f4f4"></div>
<div class="g" style="left:156px;top:463px;width:5px;height:47px;background:#FFA54F"></div>
<div class="g" style="left:163px;top:468px;width:5px;height:42px;background:#EE9A00"></div>
<div class="g" style="left:170px;top:478px;width:5px;height:32px;background:#8FBC8F"></div>
<div class="g" style="left:177px;top:474px;width:5px;height:36px;background:#8B1C62"></div>
<div class="g" style="left:184px;top:475px;width:5px;height:35px;background:#EE6A50"></div>
<div class="g" style="left:191px;top:478px;width:5px;height:32px;background:#FF0000"></div>
<div class="g" style="left:198px;top:478px;width:5px;height:32px;background:#CDB79E"></div>
<div class="g" style="left:205px;top:496px;width:5px;height:14px;background:#EEEE00"></div>
<div class="g" style="left:212px;top:494px;width:5px;height:16px;background:#EEEE00"></div>
<div class="g" style="left:219px;top:495px;width:5px;height:15px;background:#EEEE00"></div>
<div class="g" style="left:226px;top:476px;width:5px;height:34px;background:#EEEE00"></div>
<div class="g" style="left:233px;top:475px;width:5px;height:35px;background:#EEEE00"></div>
<div class="g" style="left:240px;top:489px;width:5px;height:21px;background:#EEEE00"></div>
<div class="g" style="left:247px;top:490px;width:5px;height:20px;background:#EEEE00"></div>
<div class="g" style="left:254px;top:496px;width:5px;height:14px;background:#EEEE00"></div>
<div class="g" style="left:261px;top:492px;width:5px;height:18px;background:#EEEE00"></div>
<div class="g" style="left:268px;top:494px;width:5px;height:16px;background:#EEEE00"></div>
<div class="g" style="left:275px;top:497px;width:5px;height:13px;background:#EEEE00"></div>
<div class="g" style="left:282px;top:494px;width:5px;height:16px;background:#EEEE00"></div>
<div class="g" style="left:289px;top:495px;width:5px;height:15px;background:#EEEE00"></div>
<div class="g" style="left:296px;top:468px;width:5px;height:42px;background:#00CDCD"></div>
<div class="g" style="left:303px;top:467px;width:5px;height:43px;background:#EE82EE"></div>
<div class="g" style="left:310px;top:470px;width:5px;height:40px;background:#9AC0CD"></div>
<div class="g" style="left:317px;top:477px;width:5px;height:33px;background:#EED5D2"></div>
<div class="g" style="left:324px;top:475px;width:5px;height:35px;background:#EED5D2"></div>
<div class="g" style="left:331px;top:477px;width:5px;height:33px;background:#CDB79E"></div>
<div class="g" style="left:338px;top:479px;width:5px;height:31px;background:#EEC591"></div>
<div class="g" style="left:345px;top:475px;width:5px;height:35px;background:#8B7355"></div>
<div class="g" style="left:352px;top:487px;width:5px;height:23px;background:#8B7355"></div>
<div class="g" style="left:359px;top:476px;width:5px;height:34px;background:#CDAA7D"></div>
<div class="g" style="left:366px;top:473px;width:5px;height:37px;background:#EED5D2"></div>
<div class="g" style="left:373px;top:476px;width:5px;height:34px;background:#B452CD"></div>
<div class="g" style="left:380px;top:478px;width:5px;height:32px;background:#7A378B"></div>
<div class="g" style="left:387px;top:490px;width:5px;height:20px;background:#CDB79E"></div>
<div class="g" style="left:394px;top:484px;width:5px;height:26px;background:#CDB79E"></div>
<div class="g" style="left:401px;top:503px;width:5px;height:7px;background:#CDB79E"></div>
<div class="g" style="left:408px;top:474px;width:5px;height:36px;background:#9ACD32"></div>
<div class="g" style="left:415px;top:482px;width:5px;height:28px;background:#CDB79E"></div>
<div class="g" style="left:422px;top:460px;width:5px;height:50px;background:#7A67EE"></div>
<div class="g" style="left:429px;top:464px;width:5px;height:46px;background:#FFD700"></div>
<div class="g" style="left:436px;top:488px;width:5px;height:22px;background:#FFB6C1"></div>
<div class="g" style="left:443px;top:496px;width:5px;height:14px;background:#CD9B1D"></div>
<div class="g" style="left:450px;top:473px;width:5px;height:37px;background:#B4EEB4"></div>
<div class="g" style="left:457px;top:478px;width:5px;height:32px;background:#D9D9D9"></div>
<div class="g" style="left:464px;top:477px;width:5px;height:33px;background:#3A5FCD"></div>
<div class="g" style="left:471px;top:477px;width:5px;height:33px;background:#1E90FF"></div>
<div class="g" style="left:478px;top:476px;width:5px;height:34px;background:#CDB79E"></div>
<div class="g" style="left:485px;top:476px;width:5px;height:34px;background:#CDB79E"></div>
<div class="g" style="left:492px;top:485px;width:5px;height:25px;background:#FFD39B"></div>
<div class="g" style="left:499px;top:476px;width:5px;height:34px;background:#A6A6A6"></div>
<div class="g" style="left:506px;top:466px;width:5px;height:44px;background:#008B45"></div>
<div class="g" style="left:513px;top:477px;width:5px;height:33px;background:#EED5D2"></div>
<div class="g" style="left:520px;top:481px;width:5px;height:29px;background:#EED5D2"></div>
<div class="g" style="left:527px;top:492px;width:5px;height:18px;background:#FF00FF"></div>
<div class="g" style="left:156px;top:511px;width:793px;height:2px;background:#00007f"></div>
<div class="t c " style="top:516px;letter-spacing:0.055px">H3K27Ac Mark (Often Found Near Active Regulatory Elements) on 7 cell lines from ENCODE</div>
<div class="t" style="left:13px;top:530px;letter-spacing:-0.08px">Layered H3K27Ac</div>
<div class="g" style="left:156px;top:556px;width:793px;height:1px;background:#f87078"></div>
<div class="g" style="left:156px;top:557px;width:36px;height:1px;background:#d42a3a"></div>
<div class="g" style="left:192px;top:557px;width:757px;height:1px;background:#ff6e40"></div>
<div class="g" style="left:156px;top:558px;width:793px;height:1px;background:#d8363c"></div>
<div class="g" style="left:156px;top:559px;width:793px;height:1px;background:#14052a"></div>
<div class="t c " style="top:562px;color:#3c3c8c;letter-spacing:0.035px">100 vertebrates Basewise Conservation by PhyloP</div>
<div class="t" style="left:13px;top:586px;color:#3c3c8c">100 Vert. Cons</div>
<div class="t r " style="top:561px;color:#3c3c8c">4.88 <span style="position:relative;top:-1px">_</span></div>
<div class="t r " style="top:611px;color:#8c3c3c">-4.5 <span style="position:relative;top:-1px">_</span></div>
<div class="t c nv" style="top:628px;letter-spacing:0.12px">Multiz Alignments of 100 Vertebrates</div>
<div class="t r " style="top:642px;color:#e68a00">Gaps</div>
<div class="t r nv" style="top:657px;">Human</div>
<div class="b nv" style="left:172.0px;top:657px">A</div>
<div class="b nv" style="left:208.0px;top:657px">G</div>
<div class="b nv" style="left:244.0px;top:657px">G</div>
<div class="b nv" style="left:280.0px;top:657px">G</div>
<div class="b nv" style="left:316.0px;top:657px">G</div>
<div class="b nv" style="left:352.0px;top:657px">C</div>
<div class="b nv" style="left:388.0px;top:657px">A</div>
<div class="b nv" style="left:424.0px;top:657px">T</div>
<div class="b nv" style="left:460.0px;top:657px">G</div>
<div class="b nv" style="left:496.0px;top:657px">C</div>
<div class="b nv" style="left:532.0px;top:657px">T</div>
<div class="b nv" style="left:568.0px;top:657px">G</div>
<div class="b nv" style="left:604.0px;top:657px">G</div>
<div class="b nv" style="left:640.0px;top:657px">G</div>
<div class="b nv" style="left:676.0px;top:657px">G</div>
<div class="b nv" style="left:712.0px;top:657px">A</div>
<div class="b nv" style="left:748.0px;top:657px">A</div>
<div class="b nv" style="left:784.0px;top:657px">G</div>
<div class="b nv" style="left:820.0px;top:657px">A</div>
<div class="b nv" style="left:856.0px;top:657px">A</div>
<div class="b nv" style="left:892.0px;top:657px">A</div>
<div class="b nv" style="left:928.0px;top:657px">G</div>
<div class="t r nv" style="top:672px;">Rhesus</div>
<div class="b nv" style="left:172.0px;top:672px">A</div>
<div class="b nv" style="left:208.0px;top:672px">G</div>
<div class="b nv" style="left:244.0px;top:672px">G</div>
<div class="b lt" style="left:280.0px;top:672px">A</div>
<div class="b nv" style="left:316.0px;top:672px">G</div>
<div class="b nv" style="left:352.0px;top:672px">C</div>
<div class="b nv" style="left:388.0px;top:672px">A</div>
<div class="b nv" style="left:424.0px;top:672px">T</div>
<div class="b nv" style="left:460.0px;top:672px">G</div>
<div class="b nv" style="left:496.0px;top:672px">C</div>
<div class="b nv" style="left:532.0px;top:672px">T</div>
<div class="b nv" style="left:568.0px;top:672px">G</div>
<div class="b nv" style="left:604.0px;top:672px">G</div>
<div class="b nv" style="left:640.0px;top:672px">G</div>
<div class="b nv" style="left:676.0px;top:672px">G</div>
<div class="b nv" style="left:712.0px;top:672px">A</div>
<div class="b nv" style="left:748.0px;top:672px">A</div>
<div class="b nv" style="left:784.0px;top:672px">G</div>
<div class="b nv" style="left:820.0px;top:672px">A</div>
<div class="b nv" style="left:856.0px;top:672px">A</div>
<div class="b nv" style="left:892.0px;top:672px">A</div>
<div class="b nv" style="left:928.0px;top:672px">G</div>
<div class="t r dg" style="top:687px;">Mouse</div>
<div class="b nv" style="left:172.0px;top:687px">A</div>
<div class="b nv" style="left:208.0px;top:687px">G</div>
<div class="b nv" style="left:244.0px;top:687px">G</div>
<div class="b lt" style="left:280.0px;top:687px">A</div>
<div class="b nv" style="left:316.0px;top:687px">G</div>
<div class="b lt" style="left:352.0px;top:687px">T</div>
<div class="b nv" style="left:388.0px;top:687px">A</div>
<div class="b nv" style="left:424.0px;top:687px">T</div>
<div class="b nv" style="left:460.0px;top:687px">G</div>
<div class="b nv" style="left:496.0px;top:687px">C</div>
<div class="b lt" style="left:532.0px;top:687px">A</div>
<div class="b nv" style="left:568.0px;top:687px">G</div>
<div class="b lt" style="left:604.0px;top:687px">A</div>
<div class="b lt" style="left:640.0px;top:687px">A</div>
<div class="b nv" style="left:676.0px;top:687px">G</div>
<div class="b nv" style="left:712.0px;top:687px">A</div>
<div class="b lt" style="left:748.0px;top:687px">G</div>
<div class="b lt" style="left:784.0px;top:687px">A</div>
<div class="b nv" style="left:820.0px;top:687px">A</div>
<div class="b nv" style="left:856.0px;top:687px">A</div>
<div class="b nv" style="left:892.0px;top:687px">A</div>
<div class="b nv" style="left:928.0px;top:687px">G</div>
<div class="t r nv" style="top:702px;">Dog</div>
<div class="b nv" style="left:172.0px;top:702px">A</div>
<div class="b nv" style="left:208.0px;top:702px">G</div>
<div class="b lt" style="left:244.0px;top:702px">C</div>
<div class="b nv" style="left:280.0px;top:702px">G</div>
<div class="b nv" style="left:316.0px;top:702px">G</div>
<div class="b nv" style="left:352.0px;top:702px">C</div>
<div class="b nv" style="left:388.0px;top:702px">A</div>
<div class="b nv" style="left:424.0px;top:702px">T</div>
<div class="b nv" style="left:460.0px;top:702px">G</div>
<div class="b nv" style="left:496.0px;top:702px">C</div>
<div class="b nv" style="left:532.0px;top:702px">T</div>
<div class="b nv" style="left:568.0px;top:702px">G</div>
<div class="b lt" style="left:604.0px;top:702px">A</div>
<div class="b nv" style="left:640.0px;top:702px">G</div>
<div class="b nv" style="left:676.0px;top:702px">G</div>
<div class="b nv" style="left:712.0px;top:702px">A</div>
<div class="b nv" style="left:748.0px;top:702px">A</div>
<div class="b nv" style="left:784.0px;top:702px">G</div>
<div class="b lt" style="left:820.0px;top:702px">T</div>
<div class="b nv" style="left:856.0px;top:702px">A</div>
<div class="b nv" style="left:892.0px;top:702px">A</div>
<div class="b lt" style="left:928.0px;top:702px">A</div>
<div class="t r dg" style="top:717px;">Elephant</div>
<div class="b nv" style="left:172.0px;top:717px">A</div>
<div class="b nv" style="left:208.0px;top:717px">G</div>
<div class="b nv" style="left:244.0px;top:717px">G</div>
<div class="b nv" style="left:280.0px;top:717px">G</div>
<div class="b nv" style="left:316.0px;top:717px">G</div>
<div class="b nv" style="left:352.0px;top:717px">C</div>
<div class="b nv" style="left:388.0px;top:717px">A</div>
<div class="b nv" style="left:424.0px;top:717px">T</div>
<div class="b nv" style="left:460.0px;top:717px">G</div>
<div class="b nv" style="left:496.0px;top:717px">C</div>
<div class="b lt" style="left:532.0px;top:717px">C</div>
<div class="b lt" style="left:568.0px;top:717px">A</div>
<div class="b lt" style="left:604.0px;top:717px">A</div>
<div class="b nv" style="left:640.0px;top:717px">G</div>
<div class="b nv" style="left:676.0px;top:717px">G</div>
<div class="b nv" style="left:712.0px;top:717px">A</div>
<div class="b lt" style="left:748.0px;top:717px">G</div>
<div class="b nv" style="left:784.0px;top:717px">G</div>
<div class="b nv" style="left:820.0px;top:717px">A</div>
<div class="b nv" style="left:856.0px;top:717px">A</div>
<div class="b nv" style="left:892.0px;top:717px">A</div>
<div class="b lt" style="left:928.0px;top:717px">A</div>
<div class="t r dg" style="top:732px;">Chicken</div>
<div class="b lt" style="left:172.0px;top:734px">=</div>
<div class="b lt" style="left:208.0px;top:734px">=</div>
<div class="b lt" style="left:244.0px;top:734px">=</div>
<div class="b lt" style="left:280.0px;top:734px">=</div>
<div class="b lt" style="left:316.0px;top:734px">=</div>
<div class="b lt" style="left:352.0px;top:734px">=</div>
<div class="b lt" style="left:388.0px;top:734px">=</div>
<div class="b lt" style="left:424.0px;top:734px">=</div>
<div class="b lt" style="left:460.0px;top:734px">=</div>
<div class="b lt" style="left:496.0px;top:734px">=</div>
<div class="b lt" style="left:532.0px;top:734px">=</div>
<div class="b lt" style="left:568.0px;top:734px">=</div>
<div class="b lt" style="left:604.0px;top:734px">=</div>
<div class="b lt" style="left:640.0px;top:734px">=</div>
<div class="b lt" style="left:676.0px;top:734px">=</div>
<div class="b lt" style="left:712.0px;top:734px">=</div>
<div class="b lt" style="left:748.0px;top:734px">=</div>
<div class="b lt" style="left:784.0px;top:734px">=</div>
<div class="b lt" style="left:820.0px;top:734px">=</div>
<div class="b lt" style="left:856.0px;top:734px">=</div>
<div class="b lt" style="left:892.0px;top:734px">=</div>
<div class="b lt" style="left:928.0px;top:734px">=</div>
<div class="t r nv" style="top:747px;">X_tropicalis</div>
<div class="t r dg" style="top:762px;">Zebrafish</div>
<div class="t c " style="top:778px;letter-spacing:0.05px">Repeating Elements by RepeatMasker</div>
<div class="t r " style="top:792px;">RepeatMasker</div>
<svg class="g" style="left:0;top:0" width="950" height="823" viewBox="0 0 950 823" font-family="Liberation Sans, Arial, sans-serif" font-size="40">
<text transform="translate(157.22,601.00) scale(1.0293,0.0654)" fill="#ff0000">A</text>
<text transform="translate(192.69,600.93) scale(1.1488,0.1836)" fill="#0000ff">G</text>
<text transform="translate(228.69,600.97) scale(1.1488,0.0653)" fill="#0000ff">G</text>
<text transform="translate(337.29,602.02) scale(1.0856,-0.0636)" fill="#9a8c00">C</text>
<text transform="translate(409.18,601.00) scale(1.1319,0.0436)" fill="#00dd00">T</text>
<text transform="translate(516.98,602.00) scale(1.1319,-0.0654)" fill="#00dd00">T</text>
<text transform="translate(552.69,600.96) scale(1.1488,0.1059)" fill="#0000ff">G</text>
<text transform="translate(624.67,600.96) scale(1.1565,0.1130)" fill="#0000ff">G</text>
<text transform="translate(698.12,601.00) scale(1.0481,0.1890)" fill="#ff0000">A</text>
<text transform="translate(806.42,602.00) scale(1.0255,-0.0472)" fill="#ff0000">A</text>
<text transform="translate(841.92,601.00) scale(1.0557,0.1890)" fill="#ff0000">A</text>
<text transform="translate(876.54,602.00) scale(1.0657,0.4070)" fill="#ff0000" font-weight="bold">A</text>
<text transform="translate(912.69,600.98) scale(1.1488,0.0636)" fill="#0000ff">G</text>
</svg>
</div></body></html>
